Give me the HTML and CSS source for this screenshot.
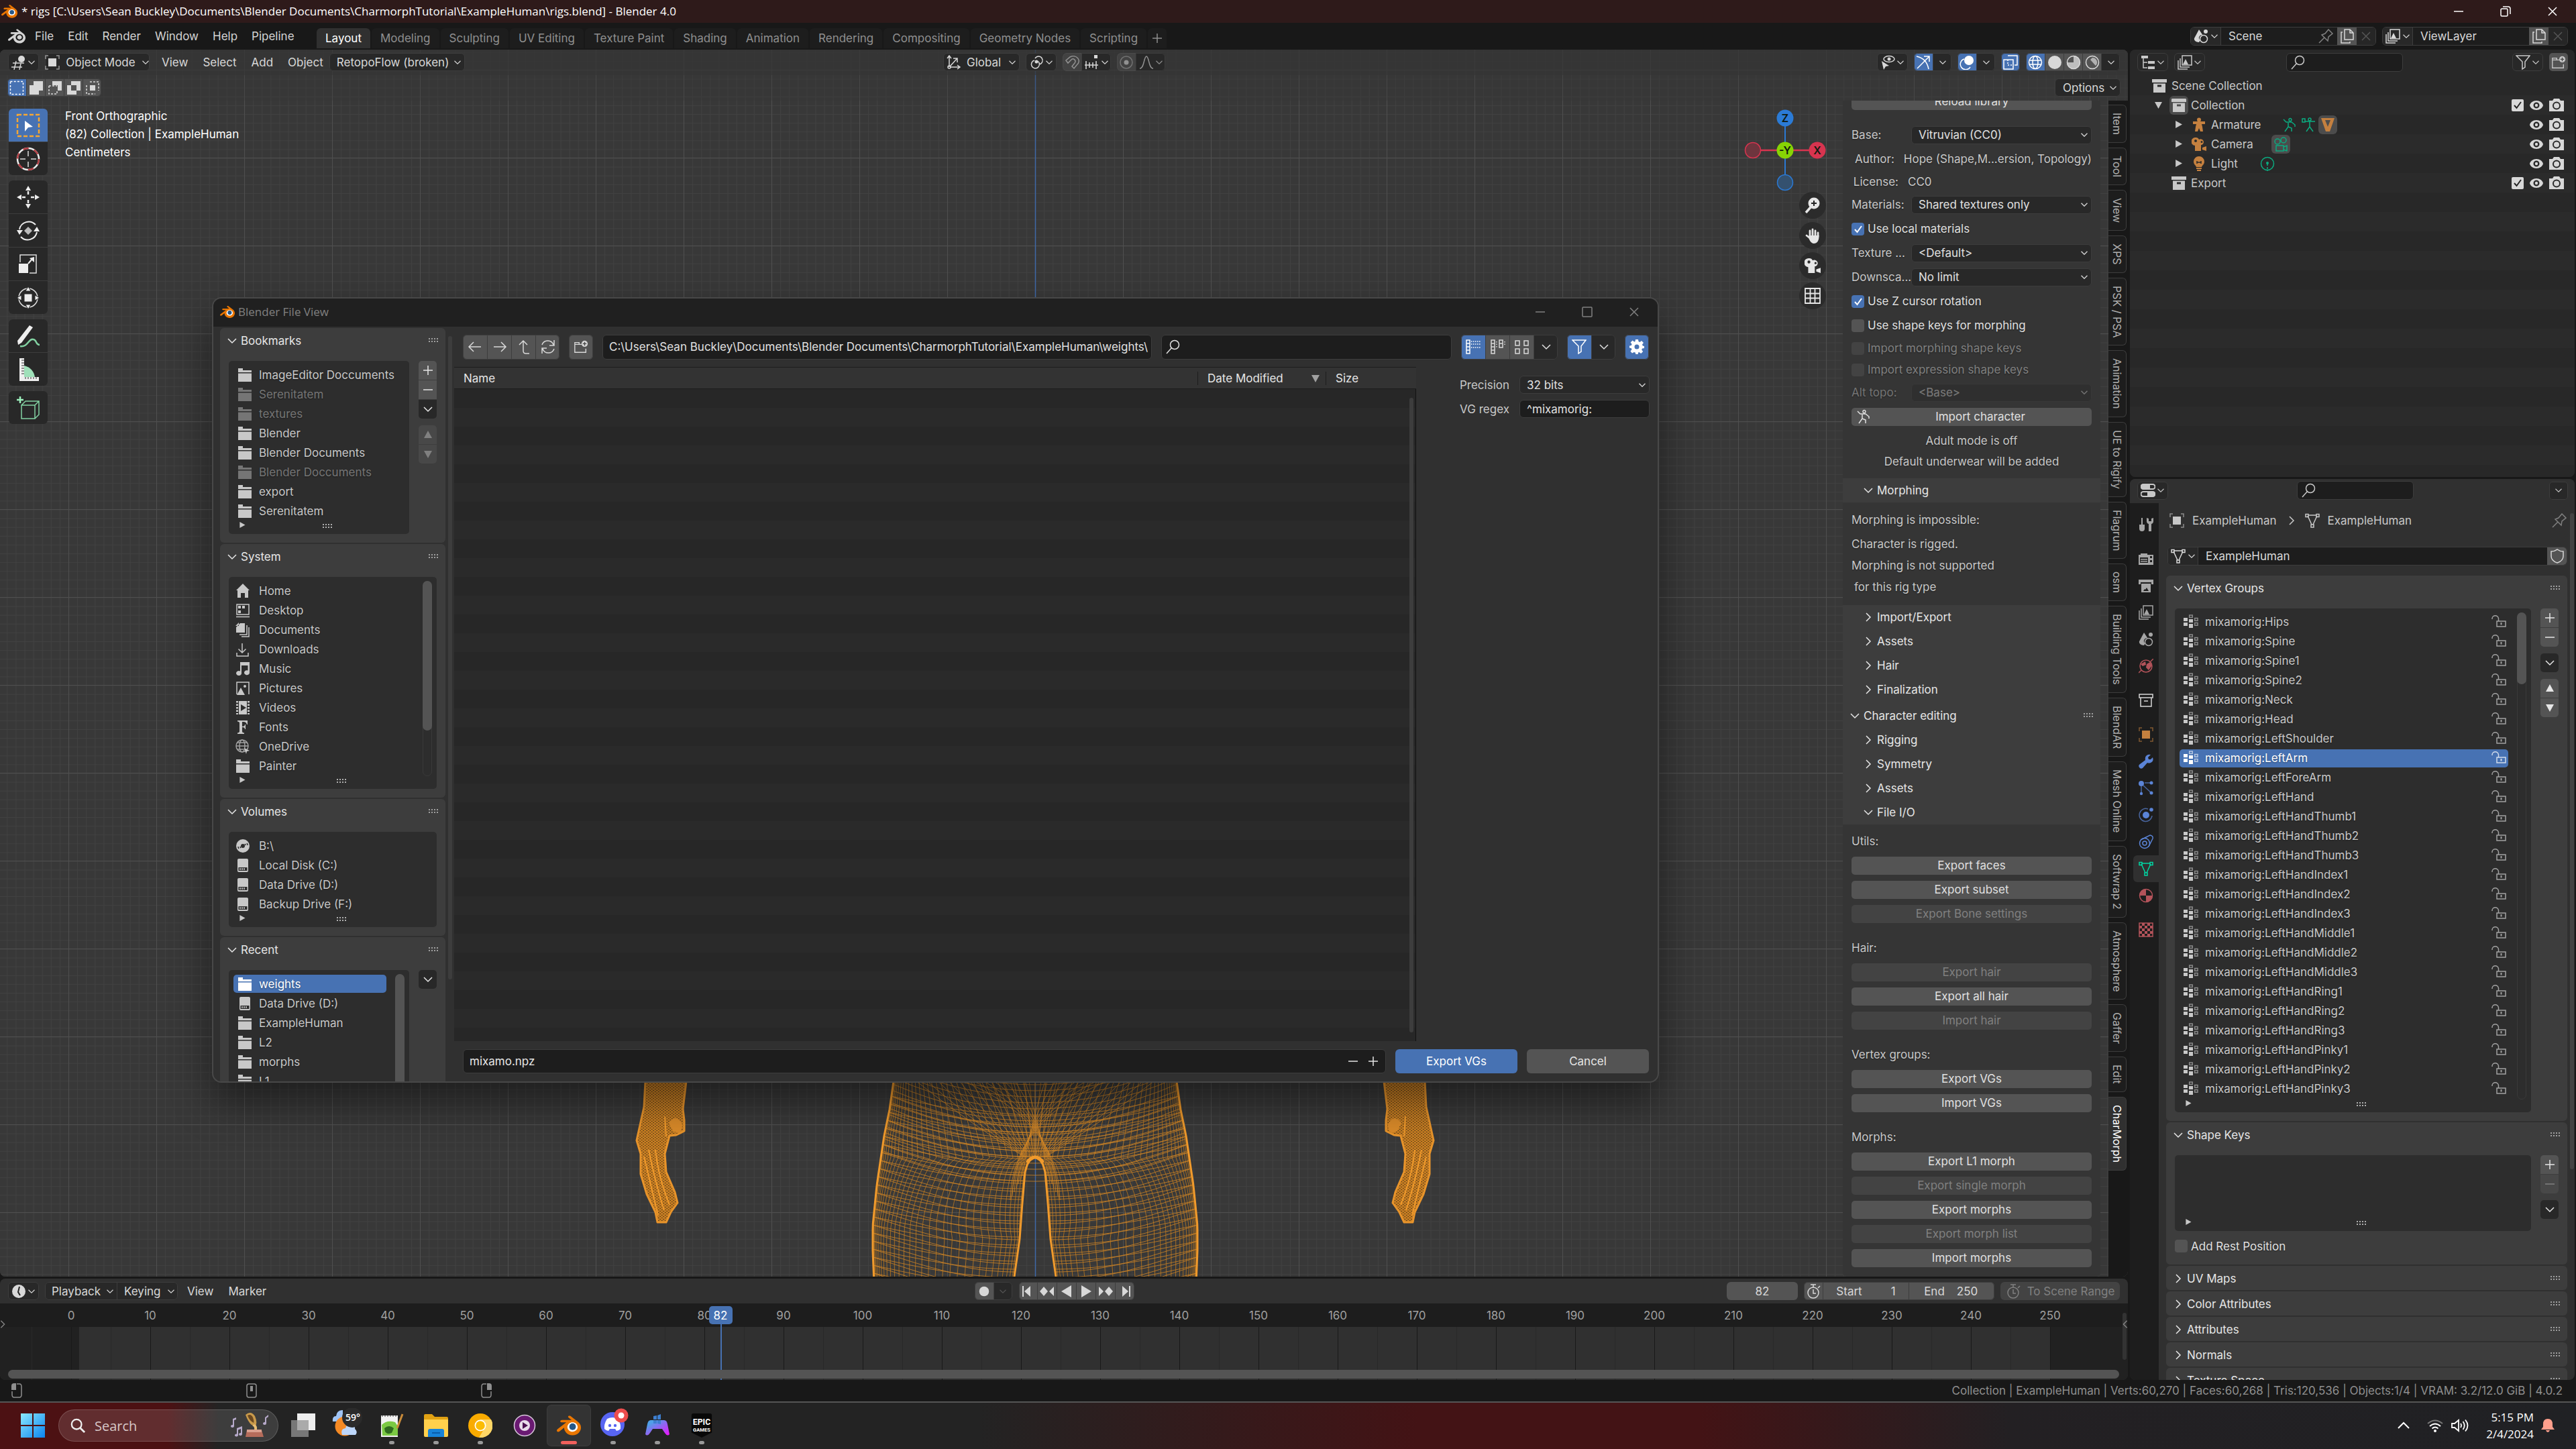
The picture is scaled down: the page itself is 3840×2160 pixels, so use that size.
FILE: index.html
```html
<!DOCTYPE html>
<html lang="en">
<head>
<meta charset="utf-8">
<title>rigs.blend - Blender 4.0</title>
<link rel="stylesheet" href="styles.css">
</head>
<body>
<svg class="sprite" aria-hidden="true">
<symbol id="blender" viewBox="0 0 24 24"><path fill="currentColor" d="M12.51 13.214c.046-.8.438-1.506 1.03-2.006a3.424 3.424 0 0 1 2.212-.79c.85 0 1.631.3 2.211.79.592.5.983 1.206 1.028 2.005.045.823-.285 1.586-.865 2.153a3.389 3.389 0 0 1-2.374.938 3.393 3.393 0 0 1-2.376-.938c-.58-.567-.91-1.33-.865-2.152M7.35 14.831c.006.314.106.922.256 1.398a7.372 7.372 0 0 0 1.593 2.757 8.227 8.227 0 0 0 2.787 2.001 8.947 8.947 0 0 0 3.66.76 8.964 8.964 0 0 0 3.657-.772 8.285 8.285 0 0 0 2.785-2.01 7.428 7.428 0 0 0 1.592-2.762 6.964 6.964 0 0 0 .25-3.074 7.123 7.123 0 0 0-1.016-2.779 7.764 7.764 0 0 0-1.852-2.043h.002L13.566 2.55l-.02-.015c-.492-.378-1.319-.376-1.86.002-.547.382-.609 1.015-.123 1.415l-.001.001 3.126 2.543-9.53.01h-.013c-.788.001-1.545.518-1.695 1.172-.154.665.38 1.217 1.2 1.22V8.9l4.83-.01-8.62 6.617-.034.025c-.813.622-1.075 1.658-.563 2.313.52.667 1.625.668 2.447.004L7.414 14s-.069.52-.063.831zm12.09 1.741c-.97.988-2.326 1.548-3.795 1.55-1.47.004-2.827-.552-3.797-1.538a4.51 4.51 0 0 1-1.036-1.622 4.282 4.282 0 0 1 .282-3.519 4.702 4.702 0 0 1 1.153-1.371c.942-.768 2.141-1.183 3.396-1.185 1.256-.002 2.455.41 3.398 1.175.48.391.87.854 1.152 1.367a4.28 4.28 0 0 1 .522 1.706 4.236 4.236 0 0 1-.239 1.811 4.54 4.54 0 0 1-1.035 1.626"/></symbol>
<symbol id="blender-color" viewBox="0 0 24 24"><circle cx="15.7" cy="13.2" r="6" fill="#fff"/><circle cx="15.7" cy="13.2" r="3.3" fill="#265787"/><path fill="#ea7600" d="M7.35 14.831c.006.314.106.922.256 1.398a7.372 7.372 0 0 0 1.593 2.757 8.227 8.227 0 0 0 2.787 2.001 8.947 8.947 0 0 0 3.66.76 8.964 8.964 0 0 0 3.657-.772 8.285 8.285 0 0 0 2.785-2.01 7.428 7.428 0 0 0 1.592-2.762 6.964 6.964 0 0 0 .25-3.074 7.123 7.123 0 0 0-1.016-2.779 7.764 7.764 0 0 0-1.852-2.043h.002L13.566 2.55l-.02-.015c-.492-.378-1.319-.376-1.86.002-.547.382-.609 1.015-.123 1.415l-.001.001 3.126 2.543-9.53.01h-.013c-.788.001-1.545.518-1.695 1.172-.154.665.38 1.217 1.2 1.22V8.9l4.83-.01-8.62 6.617-.034.025c-.813.622-1.075 1.658-.563 2.313.52.667 1.625.668 2.447.004L7.414 14s-.069.52-.063.831zm12.09 1.741c-.97.988-2.326 1.548-3.795 1.55-1.47.004-2.827-.552-3.797-1.538a4.51 4.51 0 0 1-1.036-1.622 4.282 4.282 0 0 1 .282-3.519 4.702 4.702 0 0 1 1.153-1.371c.942-.768 2.141-1.183 3.396-1.185 1.256-.002 2.455.41 3.398 1.175.48.391.87.854 1.152 1.367a4.28 4.28 0 0 1 .522 1.706 4.236 4.236 0 0 1-.239 1.811 4.54 4.54 0 0 1-1.035 1.626"/></symbol>
<symbol id="down" viewBox="0 0 16 16"><path class="ln" d="M2 5l6 6 6-6"/></symbol>
<symbol id="right" viewBox="0 0 16 16"><path class="ln" d="M5 2l6 6-6 6"/></symbol>
<symbol id="left" viewBox="0 0 16 16"><path class="ln" d="M11 2L5 8l6 6"/></symbol>
<symbol id="grip" viewBox="0 0 16 8"><path fill="currentColor" d="M1 0h2v2H1zm4 0h2v2H5zm4 0h2v2H9zm4 0h2v2h-2zM1 4h2v2H1zm4 0h2v2H5zm4 0h2v2H9zm4 0h2v2h-2z"/></symbol>
<symbol id="tri" viewBox="0 0 10 10"><path fill="currentColor" d="M1 0l9 5-9 5z"/></symbol>
<symbol id="tri-down" viewBox="0 0 12 12"><path fill="currentColor" d="M0 1h12L6 12z"/></symbol>
<symbol id="tri-up" viewBox="0 0 12 12"><path fill="currentColor" d="M0 11h12L6 0z"/></symbol>
<symbol id="plus" viewBox="0 0 16 16"><path class="ln" d="M8 1v14M1 8h14"/></symbol>
<symbol id="minus" viewBox="0 0 16 16"><path class="ln" d="M1 8h14"/></symbol>
<symbol id="cross" viewBox="0 0 16 16"><path class="ln" d="M2 2l12 12M14 2L2 14"/></symbol>
<symbol id="max" viewBox="0 0 16 16"><rect class="ln" x="1" y="1" width="14" height="14" rx="1"/></symbol>
<symbol id="restore" viewBox="0 0 16 16"><path class="ln" d="M1 5.500a1.500 1.500 0 0 1 1.500-1.500h7a1.500 1.500 0 0 1 1.500 1.500v8a1.500 1.500 0 0 1-1.500 1.500h-7a1.500 1.500 0 0 1-1.500-1.500zM4 1h8q3 0 3 3v8"/></symbol>
<symbol id="search" viewBox="0 0 22 22"><path class="ln" d="M1 21l7.500-8.500"/><circle class="ln" cx="13" cy="8" r="6.500"/></symbol>
<symbol id="folder" viewBox="0 0 22 22"><path fill="currentColor" d="M1 1h7v3h13v3H1zM1 8.500h20V21H1z"/></symbol>
<symbol id="newfolder" viewBox="0 0 24 22"><path class="ln" d="M13 7H9V4H2v16h18v-6M2 7h8"/><circle cx="18" cy="6" r="5" fill="currentColor"/><path d="M18 3v6M15 6h6" stroke="#444" stroke-width="1.500"/></symbol>
<symbol id="home" viewBox="0 0 22 22"><path fill="currentColor" d="M11 0l10 10h-2v11h-5v-7H8v7H3V10H1z"/></symbol>
<symbol id="desktop" viewBox="0 0 22 22"><path class="ln" d="M2 2h18v15H2zM1 20.500h20"/><path fill="currentColor" d="M4 4h4v4H4zm0 7h4v4H4zM10 4h4v4h-4z"/></symbol>
<symbol id="documents" viewBox="0 0 22 22"><path fill="currentColor" d="M7 1h7v14H1V7zM5 0L0 5h5z"/><path class="ln" d="M17 4v14H6M20 7v14H9"/></symbol>
<symbol id="download" viewBox="0 0 22 22"><path class="ln" d="M10 2v14M4.500 10.500L10 16l5.500-5.500M2 16v5h17v-5"/></symbol>
<symbol id="music" viewBox="0 0 22 22"><path fill="currentColor" d="M7 1h14v16a4 3.500 0 1 1-2.500-3.500V6H9v12a4 3.500 0 1 1-2-3.500z"/></symbol>
<symbol id="picture" viewBox="0 0 22 22"><path class="ln" d="M2 20V2h18v18"/><path fill="currentColor" d="M2 21l6-11 6 11z"/><circle cx="14" cy="8" r="2" fill="currentColor"/></symbol>
<symbol id="video" viewBox="0 0 22 22"><path fill="currentColor" fill-rule="evenodd" d="M5 1h12v20H5zm3 5v10l8-5z"/><path stroke="currentColor" stroke-width="3" stroke-dasharray="2.500 2" d="M2.500 1v20M19.500 1v20"/></symbol>
<symbol id="font" viewBox="0 0 22 22"><path fill="currentColor" d="M3 1h15v6h-1c-1-3-2-4-5-4h-2v7c3 0 4-1 4-3h1v7h-1c0-2-1-3-4-3v6c0 2 1 2 3 2.500V21H3v-1.500C5 19 6 19 6 17V5C6 3 5 3 3 2.500z"/></symbol>
<symbol id="globe" viewBox="0 0 22 22"><g opacity=".75"><circle class="ln" cx="10" cy="10" r="9"/><ellipse class="ln" cx="10" cy="10" rx="4" ry="9"/><path class="ln" d="M1 10h18M3 5h14M3 15h9"/></g><path fill="currentColor" d="M13 13l8 4-4 1-1 4z"/></symbol>
<symbol id="disc" viewBox="0 0 22 22"><circle cx="11" cy="11" r="10" fill="currentColor"/><circle cx="11" cy="11" r="3" fill="#2d2d2d"/><path d="M4 12a7 7 0 0 0 1 3M7 12a4 4 0 0 0 1 2M18 10a7 7 0 0 0-1-3M15 10a4 4 0 0 0-1-2" stroke="#2d2d2d" stroke-width="1.500" fill="none"/></symbol>
<symbol id="drive" viewBox="0 0 22 22"><path fill="currentColor" d="M5 1h12q2 0 2 2v16q0 2-2 2H5q-2 0-2-2V3q0-2 2-2z"/><path fill="#2d2d2d" d="M4.500 14h13v5h-13z"/><path stroke="currentColor" stroke-width="1.500" d="M7 15v3M10 15v3M13 15v3"/></symbol>
<symbol id="arrow-l" viewBox="0 0 22 22"><path class="ln" d="M20 11H2M9 4l-7 7 7 7"/></symbol>
<symbol id="arrow-r" viewBox="0 0 22 22"><path class="ln" d="M2 11h18M13 4l7 7-7 7"/></symbol>
<symbol id="arrow-u" viewBox="0 0 22 22"><path class="ln" d="M4 8l6-6 6 6M10 2v15q0 4 4 4h5"/></symbol>
<symbol id="refresh" viewBox="0 0 22 22"><path class="ln" d="M2 8a9 9 0 0 1 17 0M20 1v8h-7M20 14a9 9 0 0 1-17 0M2 21v-8h7"/></symbol>
<symbol id="listv" viewBox="0 0 22 22"><path class="ln" d="M1 1h5v20H1zM1 6h5M1 11h5M1 16h5"/><path class="ln" stroke-dasharray="1.500 1.500" d="M8 3h14M8 7h14M8 12h14"/></symbol>
<symbol id="listh" viewBox="0 0 22 22"><path class="ln" d="M1 1h5v20H1zM1 6h5M1 11h5M1 16h5M13 1h5v11h-5zM13 6h5"/><path class="ln" stroke-dasharray="1.500 2" d="M9 3v10M21 3v6"/></symbol>
<symbol id="thumbs" viewBox="0 0 22 22"><path class="ln" d="M1 2h6v7H1zM14 2h6v7h-6zM1 14h6v7H1zM14 14h6v7h-6z"/></symbol>
<symbol id="funnel" viewBox="0 0 22 22"><path class="ln" d="M1 1h20l-7 9v8l-4 3V10z"/></symbol>
<symbol id="gear" viewBox="0 0 22 22"><path fill="currentColor" fill-rule="evenodd" d="M9 0h4l.5 3 2 1 2.500-2 3 3-2 2.500.8 2L22 10v3l-3 .5-.8 2 2 2.500-3 3-2.700-2-1.500.6L12.700 22H9.300l-.6-2.400-2-.7L4 20.500l-2.500-3 2-2.500-.8-2L0 12.500V9.400L2.700 9l.9-2-2-2.500 3-3 2.600 2L8.500 3zM11 7.500a3.500 3.500 0 1 0 0 7 3.500 3.500 0 0 0 0-7z"/></symbol>
<symbol id="vg" viewBox="0 0 22 22"><path fill="currentColor" d="M0 5h6v5H0zM0 12h6v5H0zM8 7h6v5H8zM8 14h6v6H8z"/><path fill="none" stroke="currentColor" opacity=".6" stroke-width="1.500" d="M8.700 1h4.500v3.500H8.700zM16.700 5.500H21v3.700h-4.300zM16.700 12.500H21v3.700h-4.300z"/></symbol>
<symbol id="lock" viewBox="0 0 22 22"><g opacity=".75"><path class="ln" d="M8 10h13v8H8zM1 7a4.500 4.500 0 0 1 9.500-1v4"/><path fill="currentColor" d="M13.500 12h2v3.500h-2z"/></g></symbol>
<symbol id="objdata" viewBox="0 0 22 22"><path fill="currentColor" d="M5 5h12v12H5z"/><path class="ln" opacity=".6" d="M1 6V1h4M17 1h4v5M21 16v5h-4M5 21H1v-5"/></symbol>
<symbol id="mesh" viewBox="0 0 22 22"><path class="ln" d="M4 4l6 13M18 4l-6 13M5 3h12"/><path class="ln" d="M1 1.500h4v4H1zM17 1.500h4v4h-4zM9 17h4v4H9z"/></symbol>
<symbol id="shield" viewBox="0 0 22 22"><path class="ln" d="M11 1q4 3 9 3v7q0 7-9 10-9-3-9-10V4q5 0 9-3z"/></symbol>
<symbol id="pin" viewBox="0 0 22 22"><path class="ln" d="M1 21l8-8M5 9l9 9 1-6 6-5-6-6-5 6z"/></symbol>
<symbol id="collection" viewBox="0 0 22 22"><path fill="currentColor" fill-rule="evenodd" d="M0 1h22v5H0zM2 7.500h18V21H2zM8 9.500v3h6v-3z"/></symbol>
<symbol id="collection-o" viewBox="0 0 22 22"><path class="ln" d="M1 2h20v5H1zM3 7v13h16V7M8 12h6"/></symbol>
<symbol id="eye" viewBox="0 0 22 22"><path fill="currentColor" fill-rule="evenodd" d="M11 4c5 0 9 3 10 7-1 4-5 7-10 7S2 15 1 11c1-4 5-7 10-7zm0 2.500a4.500 4.500 0 1 0 0 9 4.500 4.500 0 0 0 0-9z"/><circle cx="11" cy="11" r="2.200" fill="currentColor"/></symbol>
<symbol id="photo" viewBox="0 0 22 22"><path fill="currentColor" fill-rule="evenodd" d="M0 4h5l2-3h8l2 3h5v16H0zm11 1.500a6 6 0 1 0 0 12 6 6 0 0 0 0-12z"/><circle cx="11" cy="11.500" r="4" fill="currentColor"/></symbol>
<symbol id="arm" viewBox="0 0 22 22"><circle cx="11" cy="3.500" r="3" fill="currentColor"/><path fill="currentColor" d="M2 6h18v4h-5l1 4 1 7h-4l-2-5-2 5H5l1-7 1-4H2z"/></symbol>
<symbol id="camera" viewBox="0 0 22 22"><path fill="currentColor" fill-rule="evenodd" d="M6 1a5 5 0 0 1 5 3 4.500 4.500 0 1 1 4 8h-1v9H5v-8A6 6 0 0 1 6 1zm0 3a2 2 0 1 0 0 4 2 2 0 0 0 0-4zm9 2a1.500 1.500 0 1 0 0 3 1.500 1.500 0 0 0 0-3zM22 14v7l-6-2v-3z"/></symbol>
<symbol id="camera-o" viewBox="0 0 22 22"><path class="ln" d="M4 13h11v8H4zM15 15l5-2v8l-5-2"/><circle class="ln" cx="6" cy="7" r="4"/><circle class="ln" cx="15" cy="5" r="4"/></symbol>
<symbol id="bulb" viewBox="0 0 22 22"><path fill="currentColor" d="M11 0a8 8 0 0 1 8 8c0 4-3 5-4 8H7c-1-3-4-4-4-8a8 8 0 0 1 8-8zM7 17h8v2H7zM8 20h6v2H8z"/><path d="M8 7v4M8 9h6M14 7v4" stroke="#282828" stroke-width="1.500"/></symbol>
<symbol id="light-o" viewBox="0 0 22 22"><circle class="ln" cx="11" cy="11" r="9.500"/><circle cx="11" cy="10" r="2" fill="currentColor"/><path class="ln" stroke-dasharray="3 2" d="M11 11v11"/></symbol>
<symbol id="pose" viewBox="0 0 22 22"><path class="ln" d="M1 3l4 4h8l5 4v3M8 8v6l-5 7M8 14l5 2v5M11 1.500a2 2 0 1 1-.1 0"/></symbol>
<symbol id="pose2" viewBox="0 0 22 22"><path class="ln" d="M1 2h4v5H1zM5 6h15M12 6v8l-5 7M12 14l5 7"/><circle class="ln" cx="12" cy="3" r="2"/></symbol>
<symbol id="tridata" viewBox="0 0 22 22"><path fill="currentColor" fill-rule="evenodd" d="M1 1h20l-7 20H8zM7 4l4 10 4-10z"/></symbol>
<symbol id="grid3d" viewBox="0 0 22 22"><path class="ln" d="M2 12h17M0 18h16M7 9L4 22M14 13l-2 9"/><circle cx="15" cy="6" r="5" fill="currentColor"/></symbol>
<symbol id="tree" viewBox="0 0 22 22"><path class="ln" d="M4 4v15h6M4 11h6"/><path fill="currentColor" d="M1 1h10v4H1zM11 9h10v4H11zM11 17h10v4H11z"/></symbol>
<symbol id="layers" viewBox="0 0 22 22"><path class="ln" d="M7 1h14v14H7zM4 5v13h14M1 8v13h14"/><path fill="currentColor" d="M8 14l4-8 4 8z"/></symbol>
<symbol id="scene" viewBox="0 0 22 22"><path fill="currentColor" d="M8 1l6 9a4 4 0 0 0-4 7l-2 3a7 5 0 0 1-7-6z"/><circle class="ln" cx="15" cy="15" r="5.500"/><circle cx="18" cy="4" r="3" fill="currentColor"/></symbol>
<symbol id="copy" viewBox="0 0 22 22"><path class="ln" d="M7 1h8l5 5v10H7zM15 1v5h5M4 5H2v16h13v-2"/></symbol>
<symbol id="axes" viewBox="0 0 22 22"><path class="ln" d="M4 18V2M1 5l3-4 3 4M5 18h14M16 15l4 3-4 3M5 17L15 6M10 5h6v6"/><circle class="ln" cx="4" cy="18" r="2"/></symbol>
<symbol id="pivot" viewBox="0 0 22 22"><path class="ln" d="M9 5a6 6 0 1 1 6 9M13 9a6 6 0 1 1-5-1"/><circle cx="11" cy="10" r="2.500" fill="currentColor"/></symbol>
<symbol id="magnet" viewBox="0 0 22 22"><path class="ln" d="M2 8l6-5c10-5 18 6 10 12l-4 5-3-3 4-5c3-4-2-8-5-5L5 12z"/></symbol>
<symbol id="snap" viewBox="0 0 22 22"><path class="ln" d="M2 9v12M7 11v8M12 11v8M17 9v12M0 15h20"/><path fill="currentColor" d="M14 0h5v5h-5z"/></symbol>
<symbol id="prop" viewBox="0 0 22 22"><circle class="ln" cx="11" cy="11" r="9" opacity=".6"/><circle cx="11" cy="11" r="3.500" fill="currentColor"/></symbol>
<symbol id="falloff" viewBox="0 0 22 22"><path class="ln" d="M1 20C8 20 7 2 11 2s3 18 10 18"/></symbol>
<symbol id="vis" viewBox="0 0 22 22"><path fill="currentColor" d="M2 9l11 7-5 1-3 5z"/><ellipse class="ln" cx="13" cy="6" rx="8" ry="4.500"/><circle cx="13" cy="6" r="2.500" fill="currentColor"/></symbol>
<symbol id="gizmo" viewBox="0 0 22 22"><path class="ln" d="M2 20L20 2M12 2h8v8M1 2q15 3 18 19"/></symbol>
<symbol id="overlay" viewBox="0 0 22 22"><circle cx="14" cy="8" r="7" fill="currentColor"/><path class="ln" d="M7 6a8 8 0 1 0 9 12"/></symbol>
<symbol id="xray" viewBox="0 0 22 22"><path class="ln" d="M7 1h14v14h-4M1 7h14v14H1z"/><path class="ln" stroke-dasharray="2 2" d="M7 7v8h8"/></symbol>
<symbol id="wire" viewBox="0 0 22 22"><circle class="ln" cx="11" cy="11" r="9.500"/><ellipse class="ln" cx="11" cy="11" rx="4" ry="9.500"/><path class="ln" d="M2 8h18M2 14h18"/></symbol>
<symbol id="solid" viewBox="0 0 22 22"><circle cx="11" cy="11" r="10" fill="currentColor"/></symbol>
<symbol id="matprev" viewBox="0 0 22 22"><circle class="ln" cx="11" cy="11" r="9.500"/><path fill="currentColor" d="M11 1a10 10 0 0 1 0 20zM1 11h10v10A10 10 0 0 1 1 11z" opacity=".8"/></symbol>
<symbol id="rendered" viewBox="0 0 22 22"><circle class="ln" cx="11" cy="11" r="9.500"/><path fill="currentColor" opacity=".7" d="M11 4a7 7 0 0 1 5 12l-8-9z"/></symbol>
<symbol id="props" viewBox="0 0 22 22"><path fill="currentColor" fill-rule="evenodd" d="M4 1h14a4 4 0 0 1 0 9H4a4 4 0 0 1 0-9zm10 2v5h4a2 2 0 0 0 0-5zM4 12h14a4 4 0 0 1 0 9H4a4 4 0 0 1 0-9zm0 2a2.500 2.500 0 0 0 0 5h6v-5z"/></symbol>
<symbol id="tools" viewBox="0 0 22 22"><path fill="currentColor" d="M4 1h2v10h3v6q0 4-4 4t-4-4v-6h3zM12 1v5q0 3 3 4v11h4V10q3-1 3-4V1l-3 1v4h-4V2z"/></symbol>
<symbol id="render" viewBox="0 0 22 22"><path fill="currentColor" fill-rule="evenodd" d="M0 5h3V3h10v2h9v15H0zm2 4v8h12V9zm15-2v3h3V7zm0 6v3h3v-3z"/><path fill="currentColor" d="M3 11h10v1.500H3zM3 14h10v1.500H3z"/></symbol>
<symbol id="output" viewBox="0 0 22 22"><path fill="currentColor" fill-rule="evenodd" d="M0 2h22v7h-3V6H3v3H0zM4 8h14v13H4zm3 11h8l-3-5-2 3-1-1z"/></symbol>
<symbol id="world" viewBox="0 0 22 22"><circle class="ln" cx="11" cy="11" r="9"/><path fill="currentColor" d="M3 8l7-4 1 5-5 2zM12 8l5-3 3 5-5 7-4-4z"/><path class="ln" d="M0 21l4-4M18 4l4-4"/></symbol>
<symbol id="wrench" viewBox="0 0 22 22"><path fill="currentColor" d="M21 5q2 6-3 8-3 1-5 0l-7 8q-3 2-5-1t1-5l8-6q-1-5 2-7 3-2 6-1l-4 4 1 3 3 0z"/></symbol>
<symbol id="particles" viewBox="0 0 22 22"><circle cx="4" cy="4" r="4" fill="currentColor"/><path class="ln" d="M4 8v11M9 3h10M7 7l12 11" opacity=".7"/><circle cx="19" cy="3" r="2.500" fill="currentColor"/><circle cx="4" cy="19" r="2.200" fill="currentColor"/><circle cx="19" cy="18" r="2.500" fill="currentColor"/></symbol>
<symbol id="physics" viewBox="0 0 22 22"><circle cx="11" cy="11" r="5" fill="currentColor"/><path class="ln" opacity=".7" d="M14 2a9.500 9.500 0 1 0 6 10"/><circle cx="19" cy="3" r="2.800" fill="currentColor"/></symbol>
<symbol id="constraint" viewBox="0 0 22 22"><path class="ln" d="M3 8L17 1q5 1 4 5l-6 12"/><circle class="ln" cx="9" cy="13" r="7.500"/><circle class="ln" cx="9" cy="13" r="3"/></symbol>
<symbol id="material" viewBox="0 0 22 22"><circle class="ln" cx="11" cy="11" r="9.500"/><path fill="currentColor" d="M11 1v10H1A10 10 0 0 1 11 1zM11 11h10a10 10 0 0 1-10 10z"/></symbol>
<symbol id="texture" viewBox="0 0 22 22"><path class="ln" d="M1 1h20v20H1z"/><path fill="currentColor" d="M5 1h4v4H5zm8 0h4v4h-4zM1 5h4v4H1zm8 0h4v4H9zm8 0h4v4h-4zM5 9h4v4H5zm8 0h4v4h-4zM1 13h4v4H1zm8 0h4v4H9zm8 0h4v4h-4zM5 17h4v4H5zm8 0h4v4h-4z"/></symbol>
<symbol id="clock" viewBox="0 0 22 22"><circle cx="11" cy="11" r="10" fill="currentColor"/><path d="M12 4l-2 8 3 5" stroke="#222" stroke-width="2" fill="none"/></symbol>
<symbol id="stopwatch" viewBox="0 0 22 22"><circle class="ln" cx="11" cy="13" r="8"/><path class="ln" d="M11 5V1M7 1h8M18 6l3-3M11 8v6h4"/></symbol>
</svg>

<div class="app">
<header class="titlebar">
  <svg class="ic"><use href="#blender-color"/></svg>
  <h1>* rigs [C:\Users\Sean Buckley\Documents\Blender Documents\CharmorphTutorial\ExampleHuman\rigs.blend] - Blender 4.0</h1>
  <div class="wincontrols">
    <button aria-label="Minimize"><svg class="i16"><use href="#minus"/></svg></button>
    <button aria-label="Restore"><svg class="i16"><use href="#restore"/></svg></button>
    <button aria-label="Close"><svg class="i16"><use href="#cross"/></svg></button>
  </div>
</header>

<nav class="topbar">
  <svg class="ic logo"><use href="#blender"/></svg>
  <div class="menus"><button>File</button><button>Edit</button><button>Render</button><button>Window</button><button>Help</button><button>Pipeline</button></div>
  <div class="workspaces"><button class="on">Layout</button><button>Modeling</button><button>Sculpting</button><button>UV Editing</button><button>Texture Paint</button><button>Shading</button><button>Animation</button><button>Rendering</button><button>Compositing</button><button>Geometry Nodes</button><button>Scripting</button><button aria-label="Add workspace"><svg class="i16"><use href="#plus"/></svg></button></div>
  <div class="datablocks">
    <div class="idblock scene"><button class="dd" aria-label="Browse scene"><svg class="ic"><use href="#scene"/></svg><svg class="ch"><use href="#down"/></svg></button><input aria-label="Scene" value="Scene"><svg class="ic pin"><use href="#pin"/></svg><button class="act" aria-label="New scene"><svg class="ic"><use href="#copy"/></svg></button><button class="off" aria-label="Delete scene"><svg class="i16"><use href="#cross"/></svg></button></div>
    <div class="idblock layer"><button class="dd" aria-label="Browse layer"><svg class="ic"><use href="#layers"/></svg><svg class="ch"><use href="#down"/></svg></button><input aria-label="View layer" value="ViewLayer"><button class="act" aria-label="New layer"><svg class="ic"><use href="#copy"/></svg></button><button class="off" aria-label="Delete layer"><svg class="i16"><use href="#cross"/></svg></button></div>
  </div>
</nav>

<main class="areas">
<div class="leftcol">
<section class="viewport">
  <svg class="canvas" viewBox="0 0 3172 1829" preserveAspectRatio="xMidYMax slice" aria-hidden="true">
    <defs>
      <pattern id="minor" width="13.1" height="13.1" patternUnits="userSpaceOnUse" x="1543" y="161.500"><path d="M0 .5H13.100M.5 0V13.100" stroke="#414141" stroke-width="1"/></pattern>
      <pattern id="major" width="131" height="131" patternUnits="userSpaceOnUse" x="1543" y="161"><path d="M0 .5H131M.5 0V131" stroke="#4f4f4f" stroke-width="1"/></pattern>
      <pattern id="weave" width="5" height="4" patternUnits="userSpaceOnUse"><path fill="#c47c22" d="M0 0h5v4H0z"/><path fill="#4a3318" d="M1 1h1.500v1H1zM3.500 3H5v1H3.500z"/></pattern>
    </defs>
    <rect x="-4000" y="-3000" width="12000" height="9000" fill="#383838"/>
    <rect x="-4000" y="-3000" width="12000" height="9000" fill="url(#minor)"/>
    <rect x="-4000" y="-3000" width="12000" height="9000" fill="url(#major)"/>
    <path d="M1543.500-3000V6000" stroke="#3f68a8" stroke-width="1.500"/>
    <g id="human"></g>
  </svg>
  <div class="vhead">
    <div class="grp start">
      <button class="dd box" aria-label="Editor type"><svg class="ic"><use href="#grid3d"/></svg><svg class="ch"><use href="#down"/></svg></button>
      <button class="dd box mode"><svg class="ic"><use href="#objdata"/></svg><span>Object Mode</span><svg class="ch"><use href="#down"/></svg></button>
      <div class="menus vm"><button>View</button><button>Select</button><button>Add</button><button>Object</button></div>
      <button class="dd box retopo"><span>RetopoFlow (broken)</span><svg class="ch"><use href="#down"/></svg></button>
    </div>
    <div class="grp mid">
      <button class="dd box global"><svg class="ic"><use href="#axes"/></svg><span>Global</span><svg class="ch"><use href="#down"/></svg></button>
      <button class="dd box" aria-label="Pivot"><svg class="ic"><use href="#pivot"/></svg><svg class="ch"><use href="#down"/></svg></button>
      <div class="seg"><button class="lit dim" aria-label="Snap"><svg class="ic"><use href="#magnet"/></svg></button><button class="dd" aria-label="Snap to"><svg class="ic"><use href="#snap"/></svg><svg class="ch"><use href="#down"/></svg></button></div>
      <div class="seg"><button class="lit dim" aria-label="Proportional editing"><svg class="ic"><use href="#prop"/></svg></button><button class="dd dim" aria-label="Falloff"><svg class="ic"><use href="#falloff"/></svg><svg class="ch"><use href="#down"/></svg></button></div>
    </div>
    <div class="grp end">
      <button class="dd box" aria-label="Visibility"><svg class="ic"><use href="#vis"/></svg><svg class="ch"><use href="#down"/></svg></button>
      <div class="seg"><button class="on" aria-label="Gizmos"><svg class="ic"><use href="#gizmo"/></svg></button><button aria-label="Gizmo options"><svg class="ch"><use href="#down"/></svg></button></div>
      <div class="seg"><button class="on" aria-label="Overlays"><svg class="ic"><use href="#overlay"/></svg></button><button aria-label="Overlay options"><svg class="ch"><use href="#down"/></svg></button></div>
      <div class="seg"><button class="on" aria-label="X-ray"><svg class="ic"><use href="#xray"/></svg></button></div>
      <div class="seg"><button class="on" aria-label="Wireframe"><svg class="ic"><use href="#wire"/></svg></button><button class="lit" aria-label="Solid"><svg class="ic"><use href="#solid"/></svg></button><button class="lit" aria-label="Material preview"><svg class="ic"><use href="#matprev"/></svg></button><button class="lit" aria-label="Rendered"><svg class="ic"><use href="#rendered"/></svg></button><button aria-label="Shading options"><svg class="ch"><use href="#down"/></svg></button></div>
    </div>
  </div>
  <div class="vtool">
    <div class="seg selmodes">
      <button class="on" aria-label="Set"><svg class="ic" viewBox="0 0 22 22"><path class="ln" stroke-dasharray="3 2.200" d="M1.500 1.500h19v19h-19z"/></svg></button>
      <button class="lit" aria-label="Extend"><svg class="ic" viewBox="0 0 22 22"><path fill="currentColor" d="M7 1h14v14h-6v6H1V7h6z"/></svg></button>
      <button class="lit" aria-label="Subtract"><svg class="ic" viewBox="0 0 22 22"><path fill="currentColor" d="M7 1h14v14h-6V7H7z"/><path class="ln" stroke-dasharray="3 2" d="M2 8v12h12v-4M2 8h12"/></svg></button>
      <button class="lit" aria-label="Difference"><svg class="ic" viewBox="0 0 22 22"><path fill="currentColor" fill-rule="evenodd" d="M7 1h14v14h-6v6H1V7h6zm0 6v8h8V7z"/></svg></button>
      <button class="lit" aria-label="Intersect"><svg class="ic" viewBox="0 0 22 22"><path fill="currentColor" d="M7 7h8v8H7z"/><path class="ln" stroke-dasharray="3 2" d="M7 2h13v13M2 7v13h13"/></svg></button>
    </div>
    <button class="dd box options"><span>Options</span><svg class="ch"><use href="#down"/></svg></button>
  </div>
  <div class="vbody">
    <div class="toolbar">
      <div class="tgroup">
        <button class="on" aria-label="Select box"><svg viewBox="0 0 36 36"><path fill="none" stroke="#f5a733" stroke-width="2.500" stroke-dasharray="6 3" d="M2 2h32v32H2z"/><path fill="#fff" d="M13 11l12 9-7 1-5 6z"/></svg></button>
        <button aria-label="Cursor"><svg viewBox="0 0 36 36"><circle cx="18" cy="18" r="16" fill="none" stroke="#eee" stroke-width="2.500"/><circle cx="18" cy="18" r="16" fill="none" stroke="#b33b41" stroke-width="2.500" stroke-dasharray="8.400 8.400"/><path stroke="#ddd" stroke-width="1.500" d="M18 6v8M18 22v8M6 18h8M22 18h8"/></svg></button>
      </div>
      <div class="tgroup">
        <button aria-label="Move"><svg viewBox="0 0 36 36"><path fill="#eee" d="M18 1l4 7h-8zM18 35l4-7h-8zM1 18l7-4v8zM35 18l-7-4v8z"/><path stroke="#eee" stroke-width="2.500" d="M18 9v5M18 22v5M9 18h5M22 18h5"/></svg></button>
        <button aria-label="Rotate"><svg viewBox="0 0 36 36"><path fill="none" stroke="#eee" stroke-width="2" d="M5 16a14 14 0 0 1 24-7M31 20a14 14 0 0 1-24 7"/><path fill="#eee" d="M1 17h9l-5 7zM35 19h-9l5-7z"/><path fill="#bbb" d="M18 12l6 6-6 6-6-6z"/></svg></button>
        <button aria-label="Scale"><svg viewBox="0 0 36 36"><path fill="none" stroke="#ddd" stroke-width="1.500" d="M6 15V4h24v27H20"/><path fill="#eee" d="M4 17h14v14H4zM27 7v8l-7-6z"/><path stroke="#eee" stroke-width="2" d="M18 17l6-7"/></svg></button>
        <button aria-label="Transform"><svg viewBox="0 0 36 36"><circle cx="18" cy="18" r="14" fill="none" stroke="#ddd" stroke-width="1.500"/><path fill="#eee" stroke="#262626" d="M18 1l4 7h-8zM18 35l4-7h-8zM1 18l7-4v8zM35 18l-7-4v8zM12 12h12v12H12z"/></svg></button>
      </div>
      <div class="tgroup">
        <button aria-label="Annotate"><svg viewBox="0 0 36 36"><path fill="#eee" d="M20 2l5 3-17 23-5 3-1-6z"/><path fill="none" stroke="#82d2a2" stroke-width="2.500" d="M6 33c12 2 12-12 20-10 5 1 3 8 9 8"/></svg></button>
        <button aria-label="Measure"><svg viewBox="0 0 36 36"><path fill="#9fe0b9" d="M12 12a20 20 0 0 1 16 18H12z"/><path fill="#eee" d="M5 1h7v28h22v6H5z"/><path stroke="#333" d="M8 4h4M8 8h4M8 12h4M8 16h4M8 20h4M8 24h4M14 29v3M18 29v3M22 29v3M26 29v3M30 29v3"/></svg></button>
      </div>
      <div class="tgroup">
        <button aria-label="Add cube"><svg viewBox="0 0 36 36"><path fill="none" stroke="#82d2a2" stroke-width="1.500" d="M8 14h20v20H8zM8 14l6-6h20v20l-6 6M28 14l6-6"/><path stroke="#9df0bd" stroke-width="2.500" d="M6 1v10M1 6h10"/></svg></button>
      </div>
    </div>
    <div class="vinfo"><p>Front Orthographic</p><p>(82) Collection | ExampleHuman</p><p>Centimeters</p></div>
    <div class="navcol">
      <svg class="axisgizmo" viewBox="0 0 128 126"><path stroke="#2b79d3" stroke-width="2" d="M64 16v96"/><path stroke="#d8344f" stroke-width="2.500" d="M64 64h48M28 64h30"/><circle cx="16" cy="64" r="11.500" fill="#6e353e" stroke="#d8344f" stroke-width="1.500"/><circle cx="64" cy="112" r="11.500" fill="#34516f" stroke="#2b79d3" stroke-width="1.500"/><circle cx="64" cy="16" r="12.500" fill="#2b7bd6"/><circle cx="112" cy="64" r="12.500" fill="#d8344f"/><circle cx="64" cy="64" r="12.500" fill="#87d404"/><g class="axl"><text x="64" y="22">Z</text><text x="112" y="70">X</text><text x="64" y="70">-Y</text></g></svg>
      <button aria-label="Zoom"><svg viewBox="0 0 24 24"><circle cx="14" cy="9" r="8.500" fill="#e6e6e6"/><path stroke="#e6e6e6" stroke-width="3.500" d="M2 23l7-8"/><path stroke="#222" stroke-width="2" d="M14 5v8M10 9h8"/></svg></button>
      <button aria-label="Pan"><svg viewBox="0 0 24 24"><path fill="none" stroke="#e6e6e6" stroke-width="2.800" stroke-linecap="round" d="M8 13V5M12 12V3M16 12V5M20 13V8M8 16l-5-4"/><path fill="#e6e6e6" d="M6.600 12h15q0 12-8 12-4 0-7-7z"/></svg></button>
      <button aria-label="Camera view"><svg class="nv"><use href="#camera"/></svg></button>
      <button aria-label="Perspective"><svg viewBox="0 0 24 24"><path fill="none" stroke="#e6e6e6" stroke-width="1.800" d="M1 1h22v22H1zM8.500 1v22M15.500 1v22M1 8.500h22M1 15.500h22"/></svg></button>
    </div>
    <aside class="npanel">
      <div class="nbody first">
        <div class="row reload"><button class="btn">Reload library</button></div>
        <div class="row sp"><label for="base">Base:</label><select id="base"><option>Vitruvian (CC0)</option></select></div>
        <div class="row r32"><span class="ra">Author:</span><span class="val">Hope (Shape,M...ersion, Topology)</span></div>
        <div class="row r32"><span class="ra">License:</span><span class="val">CC0</span></div>
        <div class="row"><label for="mats">Materials:</label><select id="mats"><option>Shared textures only</option></select></div>
        <div class="row"><label class="ck"><input type="checkbox" checked>Use local materials</label></div>
        <div class="row"><label for="tex">Texture ...</label><select id="tex"><option>&lt;Default&gt;</option></select></div>
        <div class="row"><label for="dsc">Downsca...</label><select id="dsc"><option>No limit</option></select></div>
        <div class="row"><label class="ck"><input type="checkbox" checked>Use Z cursor rotation</label></div>
        <div class="row"><label class="ck"><input type="checkbox">Use shape keys for morphing</label></div>
        <div class="row r32"><label class="ck dis"><input type="checkbox" disabled>Import morphing shape keys</label></div>
        <div class="row r32"><label class="ck dis"><input type="checkbox" disabled>Import expression shape keys</label></div>
        <div class="row"><label class="dis" for="alt">Alt topo:</label><select id="alt" disabled><option>&lt;Base&gt;</option></select></div>
        <div class="row"><button class="btn iconic"><svg class="ic bicon"><use href="#pose"/></svg>Import character</button></div>
        <div class="row ctr">Adult mode is off</div>
        <div class="row r26 ctr">Default underwear will be added</div>
      </div>
      <button class="nh sub"><svg class="i16"><use href="#down"/></svg>Morphing</button>
      <div class="nbody msg"><p>Morphing is impossible:</p><p>Character is rigged.</p><p class="tight">Morphing is not supported</p><p class="in">for this rig type</p></div>
      <button class="nh sub"><svg class="i16"><use href="#right"/></svg>Import/Export</button>
      <button class="nh sub"><svg class="i16"><use href="#right"/></svg>Assets</button>
      <button class="nh sub"><svg class="i16"><use href="#right"/></svg>Hair</button>
      <button class="nh sub"><svg class="i16"><use href="#right"/></svg>Finalization</button>
      <button class="nh top"><svg class="i16"><use href="#down"/></svg>Character editing<svg class="grip"><use href="#grip"/></svg></button>
      <button class="nh sub"><svg class="i16"><use href="#right"/></svg>Rigging</button>
      <button class="nh sub"><svg class="i16"><use href="#right"/></svg>Symmetry</button>
      <button class="nh sub"><svg class="i16"><use href="#right"/></svg>Assets</button>
      <button class="nh sub"><svg class="i16"><use href="#down"/></svg>File I/O</button>
      <div class="nbody io">
        <div><div class="row">Utils:</div><div class="row"><button class="btn">Export faces</button></div><div class="row"><button class="btn">Export subset</button></div><div class="row"><button class="btn" disabled>Export Bone settings</button></div></div>
        <div><div class="row">Hair:</div><div class="row"><button class="btn" disabled>Export hair</button></div><div class="row"><button class="btn">Export all hair</button></div><div class="row"><button class="btn" disabled>Import hair</button></div></div>
        <div><div class="row">Vertex groups:</div><div class="row"><button class="btn">Export VGs</button></div><div class="row"><button class="btn">Import VGs</button></div></div>
        <div><div class="row">Morphs:</div><div class="row"><button class="btn">Export L1 morph</button></div><div class="row"><button class="btn" disabled>Export single morph</button></div><div class="row"><button class="btn">Export morphs</button></div><div class="row"><button class="btn" disabled>Export morph list</button></div><div class="row"><button class="btn">Import morphs</button></div></div>
      </div>
    </aside>
    <nav class="vtabs"><button>Item</button><button>Tool</button><button>View</button><button>XPS</button><button>PSK / PSA</button><button>Animation</button><button>UE to Rigify</button><button>Flagrum</button><button>osm</button><button>Building Tools</button><button>BlendAR</button><button>Mesh Online</button><button>Softwrap 2</button><button>Atmosphere</button><button>Gaffer</button><button>Edit</button><button class="on">CharMorph</button></nav>
  </div>
</section>

<section class="timeline">
  <div class="thead">
    <div class="grp start">
      <button class="dd box" aria-label="Editor type"><svg class="ic"><use href="#clock"/></svg><svg class="ch"><use href="#down"/></svg></button>
      <div class="seg pk"><button class="dd">Playback<svg class="ch"><use href="#down"/></svg></button><button class="dd">Keying<svg class="ch"><use href="#down"/></svg></button></div>
      <div class="menus tm"><button>View</button><button>Marker</button></div>
    </div>
    <div class="grp play">
      <div class="seg"><button class="lit" aria-label="Auto keying"><svg class="i16"><use href="#solid"/></svg></button><button class="dim2" aria-label="Keying options"><svg class="ch"><use href="#down"/></svg></button></div>
      <div class="seg transport">
        <button class="lit" aria-label="First frame"><svg class="ic" viewBox="0 0 22 22"><path fill="currentColor" d="M3 3h2v16H3zM15 3v16L6 11z"/></svg></button>
        <button class="lit" aria-label="Previous key"><svg class="ic" viewBox="0 0 22 22"><path fill="currentColor" d="M6 4l6 7-6 7-6-7zM21 4v14l-7-7z"/></svg></button>
        <button class="lit" aria-label="Play reverse"><svg class="ic" viewBox="0 0 22 22"><path fill="currentColor" d="M18 2v18L3 11z"/></svg></button>
        <button class="lit" aria-label="Play"><svg class="ic" viewBox="0 0 22 22"><path fill="currentColor" d="M4 2v18l15-9z"/></svg></button>
        <button class="lit" aria-label="Next key"><svg class="ic" viewBox="0 0 22 22"><path fill="currentColor" d="M16 4l6 7-6 7-6-7zM1 4v14l7-7z"/></svg></button>
        <button class="lit" aria-label="Last frame"><svg class="ic" viewBox="0 0 22 22"><path fill="currentColor" d="M17 3h2v16h-2zM7 3v16l9-8z"/></svg></button>
      </div>
    </div>
    <div class="grp end">
      <input class="num cur" aria-label="Current frame" value="82">
      <div class="seg range"><button class="lit" aria-label="Preview range"><svg class="ic"><use href="#stopwatch"/></svg></button><label class="lit">Start<input class="n1" value="1"></label><label class="lit">End<input class="n3" value="250"></label></div>
      <button class="tsr" disabled><svg class="ic"><use href="#stopwatch"/></svg>To Scene Range</button>
    </div>
  </div>
  <div class="tbody">
    <div class="ruler"><div class="cells"><span>0</span><span>10</span><span>20</span><span>30</span><span>40</span><span>50</span><span>60</span><span>70</span><span>80</span><span>90</span><span>100</span><span>110</span><span>120</span><span>130</span><span>140</span><span>150</span><span>160</span><span>170</span><span>180</span><span>190</span><span>200</span><span>210</span><span>220</span><span>230</span><span>240</span><span>250</span></div></div>
    <div class="tracks"><div class="cells lines"><i></i><i></i><i></i><i></i><i></i><i></i><i></i><i></i><i></i><i></i><i></i><i></i><i></i><i></i><i></i><i></i><i></i><i></i><i></i><i></i><i></i><i></i><i></i><i></i><i></i><i></i></div></div>
    <div class="headrail"><div class="playhead" style="left:33.46%"><b>82</b></div></div>
    <div class="hscroll"></div>
    <div class="vscroll"></div>
    <svg class="tab-l"><use href="#right"/></svg><svg class="tab-r"><use href="#left"/></svg>
  </div>
</section>
</div>

<div class="rightcol">
<section class="outliner">
  <div class="ohead">
    <button class="dd box" aria-label="Editor type"><svg class="ic"><use href="#tree"/></svg><svg class="ch"><use href="#down"/></svg></button>
    <button class="dd box" aria-label="Display mode"><svg class="ic"><use href="#layers"/></svg><svg class="ch"><use href="#down"/></svg></button>
    <label class="find os"><svg class="ic"><use href="#search"/></svg><input aria-label="Search outliner"></label>
    <button class="dd box" aria-label="Filter"><svg class="ic"><use href="#funnel"/></svg><svg class="ch"><use href="#down"/></svg></button>
    <button class="sq" aria-label="New collection"><svg class="ic"><use href="#newfolder"/></svg></button>
  </div>
  <ul class="tree">
    <li class="l0"><svg class="ic"><use href="#collection"/></svg><span>Scene Collection</span></li>
    <li class="l1"><svg class="tw"><use href="#tri-down"/></svg><svg class="ic sel"><use href="#collection"/></svg><span>Collection</span><div class="vis"><input type="checkbox" checked aria-label="Exclude Collection"><svg class="ic"><use href="#eye"/></svg><svg class="ic"><use href="#photo"/></svg></div></li>
    <li class="l2"><svg class="tw"><use href="#tri"/></svg><svg class="ic or"><use href="#arm"/></svg><span class="w1">Armature</span><svg class="ic gr"><use href="#pose"/></svg><svg class="ic gr"><use href="#pose2"/></svg><svg class="ic sel or"><use href="#tridata"/></svg><div class="vis"><svg class="ic"><use href="#eye"/></svg><svg class="ic"><use href="#photo"/></svg></div></li>
    <li class="l2"><svg class="tw"><use href="#tri"/></svg><svg class="ic or"><use href="#camera"/></svg><span class="w2">Camera</span><svg class="ic sel gr"><use href="#camera-o"/></svg><div class="vis"><svg class="ic"><use href="#eye"/></svg><svg class="ic"><use href="#photo"/></svg></div></li>
    <li class="l2"><svg class="tw"><use href="#tri"/></svg><svg class="ic or"><use href="#bulb"/></svg><span class="w3">Light</span><svg class="ic gr"><use href="#light-o"/></svg><div class="vis"><svg class="ic"><use href="#eye"/></svg><svg class="ic"><use href="#photo"/></svg></div></li>
    <li class="l1"><i class="tw"></i><svg class="ic"><use href="#collection"/></svg><span>Export</span><div class="vis"><input type="checkbox" checked aria-label="Exclude Export"><svg class="ic"><use href="#eye"/></svg><svg class="ic"><use href="#photo"/></svg></div></li>
  </ul>
</section>

<section class="properties">
  <div class="ohead">
    <button class="dd box" aria-label="Editor type"><svg class="ic"><use href="#props"/></svg><svg class="ch"><use href="#down"/></svg></button>
    <label class="find ps"><svg class="ic"><use href="#search"/></svg><input aria-label="Search properties"></label>
    <button class="sq dark" aria-label="Options"><svg class="ch"><use href="#down"/></svg></button>
  </div>
  <div class="pmain">
    <nav class="ptabs">
      <div><button aria-label="Tool"><svg><use href="#tools"/></svg></button></div>
      <div><button aria-label="Render"><svg><use href="#render"/></svg></button><button aria-label="Output"><svg><use href="#output"/></svg></button><button aria-label="View layer"><svg><use href="#layers"/></svg></button><button aria-label="Scene"><svg><use href="#scene"/></svg></button><button class="red" aria-label="World"><svg><use href="#world"/></svg></button></div>
      <div><button class="wh" aria-label="Collection"><svg><use href="#collection-o"/></svg></button></div>
      <div><button class="or" aria-label="Object"><svg><use href="#objdata"/></svg></button><button class="bl" aria-label="Modifiers"><svg><use href="#wrench"/></svg></button><button class="bl" aria-label="Particles"><svg><use href="#particles"/></svg></button><button class="bl" aria-label="Physics"><svg><use href="#physics"/></svg></button><button class="bl" aria-label="Constraints"><svg><use href="#constraint"/></svg></button><button class="gr on" aria-label="Data"><svg><use href="#mesh"/></svg></button><button class="red" aria-label="Material"><svg><use href="#material"/></svg></button></div>
      <div><button class="red" aria-label="Texture"><svg><use href="#texture"/></svg></button></div>
    </nav>
    <div class="pcontent">
      <div class="crumbs"><svg class="ic"><use href="#objdata"/></svg><span>ExampleHuman</span><svg class="i16 sep"><use href="#right"/></svg><svg class="ic"><use href="#mesh"/></svg><span>ExampleHuman</span><svg class="ic pin"><use href="#pin"/></svg></div>
      <div class="idblock data"><button class="dd" aria-label="Browse mesh"><svg class="ic"><use href="#mesh"/></svg><svg class="ch"><use href="#down"/></svg></button><input aria-label="Mesh name" value="ExampleHuman"><button class="act" aria-label="Fake user"><svg class="ic"><use href="#shield"/></svg></button></div>
      <div class="panel">
        <button class="ph"><svg class="i16"><use href="#down"/></svg>Vertex Groups<svg class="grip"><use href="#grip"/></svg></button>
        <div class="pbody">
          <div class="list">
            <div class="lrow"><ul>
<li><svg class="ic"><use href="#vg"/></svg>mixamorig:Hips<svg class="ic lk"><use href="#lock"/></svg></li>
<li><svg class="ic"><use href="#vg"/></svg>mixamorig:Spine<svg class="ic lk"><use href="#lock"/></svg></li>
<li><svg class="ic"><use href="#vg"/></svg>mixamorig:Spine1<svg class="ic lk"><use href="#lock"/></svg></li>
<li><svg class="ic"><use href="#vg"/></svg>mixamorig:Spine2<svg class="ic lk"><use href="#lock"/></svg></li>
<li><svg class="ic"><use href="#vg"/></svg>mixamorig:Neck<svg class="ic lk"><use href="#lock"/></svg></li>
<li><svg class="ic"><use href="#vg"/></svg>mixamorig:Head<svg class="ic lk"><use href="#lock"/></svg></li>
<li><svg class="ic"><use href="#vg"/></svg>mixamorig:LeftShoulder<svg class="ic lk"><use href="#lock"/></svg></li>
<li class="on"><svg class="ic"><use href="#vg"/></svg>mixamorig:LeftArm<svg class="ic lk"><use href="#lock"/></svg></li>
<li><svg class="ic"><use href="#vg"/></svg>mixamorig:LeftForeArm<svg class="ic lk"><use href="#lock"/></svg></li>
<li><svg class="ic"><use href="#vg"/></svg>mixamorig:LeftHand<svg class="ic lk"><use href="#lock"/></svg></li>
<li><svg class="ic"><use href="#vg"/></svg>mixamorig:LeftHandThumb1<svg class="ic lk"><use href="#lock"/></svg></li>
<li><svg class="ic"><use href="#vg"/></svg>mixamorig:LeftHandThumb2<svg class="ic lk"><use href="#lock"/></svg></li>
<li><svg class="ic"><use href="#vg"/></svg>mixamorig:LeftHandThumb3<svg class="ic lk"><use href="#lock"/></svg></li>
<li><svg class="ic"><use href="#vg"/></svg>mixamorig:LeftHandIndex1<svg class="ic lk"><use href="#lock"/></svg></li>
<li><svg class="ic"><use href="#vg"/></svg>mixamorig:LeftHandIndex2<svg class="ic lk"><use href="#lock"/></svg></li>
<li><svg class="ic"><use href="#vg"/></svg>mixamorig:LeftHandIndex3<svg class="ic lk"><use href="#lock"/></svg></li>
<li><svg class="ic"><use href="#vg"/></svg>mixamorig:LeftHandMiddle1<svg class="ic lk"><use href="#lock"/></svg></li>
<li><svg class="ic"><use href="#vg"/></svg>mixamorig:LeftHandMiddle2<svg class="ic lk"><use href="#lock"/></svg></li>
<li><svg class="ic"><use href="#vg"/></svg>mixamorig:LeftHandMiddle3<svg class="ic lk"><use href="#lock"/></svg></li>
<li><svg class="ic"><use href="#vg"/></svg>mixamorig:LeftHandRing1<svg class="ic lk"><use href="#lock"/></svg></li>
<li><svg class="ic"><use href="#vg"/></svg>mixamorig:LeftHandRing2<svg class="ic lk"><use href="#lock"/></svg></li>
<li><svg class="ic"><use href="#vg"/></svg>mixamorig:LeftHandRing3<svg class="ic lk"><use href="#lock"/></svg></li>
<li><svg class="ic"><use href="#vg"/></svg>mixamorig:LeftHandPinky1<svg class="ic lk"><use href="#lock"/></svg></li>
<li><svg class="ic"><use href="#vg"/></svg>mixamorig:LeftHandPinky2<svg class="ic lk"><use href="#lock"/></svg></li>
<li><svg class="ic"><use href="#vg"/></svg>mixamorig:LeftHandPinky3<svg class="ic lk"><use href="#lock"/></svg></li>
            </ul><div class="track"><div class="thumb t107"></div></div></div>
            <div class="lfoot"><svg class="ft"><use href="#tri"/></svg><svg class="grip"><use href="#grip"/></svg></div>
          </div>
          <div class="lbtns"><div><button aria-label="Add"><svg class="i16"><use href="#plus"/></svg></button><button aria-label="Remove"><svg class="i16"><use href="#minus"/></svg></button></div><div><button class="dk" aria-label="Specials"><svg class="i16"><use href="#down"/></svg></button></div><div><button aria-label="Up"><svg class="i12"><use href="#tri-up"/></svg></button><button aria-label="Down"><svg class="i12"><use href="#tri-down"/></svg></button></div></div>
        </div>
      </div>
      <div class="panel">
        <button class="ph"><svg class="i16"><use href="#down"/></svg>Shape Keys<svg class="grip"><use href="#grip"/></svg></button>
        <div class="pbody sk">
          <div class="list empty"><div class="lfoot"><svg class="ft"><use href="#tri"/></svg><svg class="grip"><use href="#grip"/></svg></div></div>
          <div class="lbtns"><div><button aria-label="Add"><svg class="i16"><use href="#plus"/></svg></button><button disabled aria-label="Remove"><svg class="i16"><use href="#minus"/></svg></button></div><div><button class="dk" aria-label="Specials"><svg class="i16"><use href="#down"/></svg></button></div></div>
        </div>
        <label class="ck rest"><input type="checkbox">Add Rest Position</label>
      </div>
      <div class="panel"><button class="ph"><svg class="i16"><use href="#right"/></svg>UV Maps<svg class="grip"><use href="#grip"/></svg></button></div>
      <div class="panel"><button class="ph"><svg class="i16"><use href="#right"/></svg>Color Attributes<svg class="grip"><use href="#grip"/></svg></button></div>
      <div class="panel"><button class="ph"><svg class="i16"><use href="#right"/></svg>Attributes<svg class="grip"><use href="#grip"/></svg></button></div>
      <div class="panel"><button class="ph"><svg class="i16"><use href="#right"/></svg>Normals<svg class="grip"><use href="#grip"/></svg></button></div>
      <div class="panel"><button class="ph"><svg class="i16"><use href="#right"/></svg>Texture Space<svg class="grip"><use href="#grip"/></svg></button></div>
    </div>
    <div class="pscroll"></div>
  </div>
</section>
</div>
</main>

<footer class="status">
  <svg class="ms" viewBox="0 0 16 22"><path class="ln" d="M8 1h4q3 0 3 4v12q0 4-3 4H4q-3 0-3-4v-5"/><path fill="currentColor" d="M0 10V4q0-4 4-4h3v10z"/></svg>
  <svg class="ms" viewBox="0 0 16 22"><rect class="ln" x="1" y="1" width="14" height="20" rx="3"/><path fill="currentColor" d="M6 4h4v8H6z"/></svg>
  <svg class="ms" viewBox="0 0 16 22"><path class="ln" d="M8 1H4Q1 1 1 5v12q0 4 3 4h8q3 0 3-4v-5"/><path fill="currentColor" d="M16 10V4q0-4-4-4H9v10z"/></svg>
  <p>Collection | ExampleHuman | Verts:60,270 | Faces:60,268 | Tris:120,536 | Objects:1/4 | VRAM: 3.2/12.0 GiB | 4.0.2</p>
</footer>

<footer class="taskbar">
  <button class="app win" aria-label="Start"><svg viewBox="0 0 36 36"><defs><linearGradient id="wg" x2="1" y2="1"><stop stop-color="#8be9ff"/><stop offset="1" stop-color="#0a84f0"/></linearGradient></defs><path fill="url(#wg)" d="M0 0h17v17H0zM19 0h17v17H19zM0 19h17v17H0zM19 19h17v17H19z"/></svg></button>
  <label class="tsearch"><svg viewBox="0 0 24 24"><circle cx="10" cy="10" r="8" fill="none" stroke="#eee" stroke-width="2.500"/><path stroke="#eee" stroke-width="3" d="M16 16l7 7"/></svg><input placeholder="Search" aria-label="Search">
    <svg class="gram" viewBox="0 0 60 40"><path fill="#c99a4b" d="M22 4q8-7 14 2 4 9 1 15l-6-2q-5-4-9-15z"/><path fill="#6b4820" d="M25 5q5-3 8 3 2 6 1 8-6-3-9-11z"/><path fill="#e8bd73" d="M35 18q5 2 4 8h-4q1-4-3-6z"/><path fill="#b56c5b" d="M24 27h22l3 10H22z"/><path fill="#d9a08f" d="M24 26h22v4H24z"/><g fill="#b6a9c9"><path d="M3 10l5-2v3l-3 1v9a2.500 2 0 1 1-2-2zM9 24l8-3v12a2.500 2 0 1 1-2-2v-6l-4 1.500v8a2.500 2 0 1 1-2-2zM51 8l5-4v3l-3 2v8a2.500 2 0 1 1-2-2z"/></g></svg></label>
  <button class="app" aria-label="Task view"><svg viewBox="0 0 36 36"><path fill="#777" d="M0 10h26v25H0z"/><path fill="#eee" d="M9 0h27v25H9z"/><path fill="#aaa" d="M9 10h17v15H9z"/></svg></button>
  <button class="app badge" aria-label="Weather"><svg viewBox="0 0 46 44"><path fill="#9fc4f5" d="M1 20q-1-8 5-8 1-9 10-9v17z"/><circle cx="19" cy="27" r="14.500" fill="#f58a24"/><path fill="#bcd6fa" d="M15 40q-3-9 5-10 2-8 9-6 6 2 5 7 5 4 1 9z"/><circle cx="30" cy="14" r="15" fill="#2b2b2b"/><text class="wt" x="31" y="19">59°</text></svg></button>
  <button class="app run" aria-label="Notepad++"><svg viewBox="0 0 36 36"><path fill="#f2f2f2" d="M2 3h25v32H2z"/><path stroke="#999" stroke-width="2" stroke-dasharray="2 2" d="M3 4h24"/><path fill="#7bc943" d="M3 17q8-8 20-4l4 6v14H4z"/><path fill="#2f6b1f" d="M7 22q7-6 14 0l-3 7q-7 3-10-2z"/><path stroke="#c98b3a" stroke-width="3" d="M34 1l-8 21"/></svg></button>
  <button class="app run" aria-label="File Explorer"><svg viewBox="0 0 36 36"><path fill="#e0a113" d="M0 3q0-2 2-2h10l4 4h18q2 0 2 2v8H0z"/><path fill="#ffd04c" d="M0 9h36v24q0 2-2 2H2q-2 0-2-2z"/><path fill="#1783d8" d="M6 35V26q0-3 3-3h18q3 0 3 3v9z"/><path fill="#0a5ca8" d="M12 28h12v2H12z"/></svg></button>
  <button class="app run" aria-label="Chrome Canary"><svg viewBox="0 0 36 36"><circle cx="18" cy="18" r="18" fill="#f9ab00"/><path fill="#ffd666" d="M18 9h16a18 18 0 0 1-18 27l7-12z"/><circle cx="18" cy="18" r="8.500" fill="#fff"/><circle cx="18" cy="18" r="6.800" fill="#fbbc04"/></svg></button>
  <button class="app" aria-label="Media player"><svg viewBox="0 0 36 36"><circle cx="18" cy="18" r="15.500" fill="#6a1a72" stroke="#d9c9dc" stroke-width="1.500"/><circle cx="18" cy="18" r="8" fill="#e8dcea"/><path fill="#4a1050" d="M15 13l8 5-8 5z"/></svg></button>
  <button class="app run act" aria-label="Blender"><svg viewBox="0 0 36 36"><use href="#blender-color"/></svg></button>
  <button class="app run badge" aria-label="Discord"><svg viewBox="0 0 46 44"><circle cx="22" cy="24" r="18" fill="#5865f2"/><path fill="#fff" d="M14 16q8-4 16 0 5 8 4 15-3 3-6 3l-2-3h-8l-2 3q-3 0-6-3-1-7 4-15z"/><circle cx="18" cy="26" r="2.200" fill="#5865f2"/><circle cx="26" cy="26" r="2.200" fill="#5865f2"/><circle cx="35" cy="11" r="10.500" fill="#ed4e4e"/><circle cx="35" cy="11" r="4.500" fill="#fff"/></svg></button>
  <button class="app run" aria-label="Game controller"><svg viewBox="0 0 36 36"><defs><linearGradient id="gg" x2="1" y2="1"><stop offset=".2" stop-color="#4ea0e8"/><stop offset="1" stop-color="#f010ff"/></linearGradient></defs><path fill="url(#gg)" d="M8 10h20q4 0 5 6l3 15q-3 4-7-2l-4-6H11l-4 6q-4 6-7 2l3-15q1-6 5-6z"/><path fill="#3d7fd0" d="M12 4l5-1v6h-5zM18 3l5-2v8h-5zM12 10h5v5h-5zM18 10h5v6l-5-1z"/></svg></button>
  <button class="app run" aria-label="Epic Games"><svg viewBox="0 0 36 38"><path fill="#080808" d="M2 3q0-3 3-3h26q3 0 3 3v27L18 38 2 30z"/><text class="e1" x="18" y="18">EPIC</text><text class="e2" x="18" y="28">GAMES</text></svg></button>
  <div class="tray">
    <svg viewBox="0 0 18 18"><path fill="none" stroke="#fff" stroke-width="2" d="M1 13l8-8 8 8"/></svg>
    <svg class="wifi" viewBox="0 0 24 20"><path fill="none" stroke="#777" stroke-width="2" d="M1 7q11-9 22 0"/><path fill="none" stroke="#fff" stroke-width="2" d="M4 11q8-7 16 0M7.500 14.500q4.500-4 9 0"/><circle cx="12" cy="18" r="2" fill="#fff"/></svg>
    <svg class="vol" viewBox="0 0 26 22"><path fill="none" stroke="#fff" stroke-width="1.800" d="M1 8h4l6-5v16l-6-5H1zM14 8q2 3 0 6M17.500 5q4.500 6 0 12M21 2.500q7 8.500 0 17"/></svg>
    <p class="clk">5:15 PM<br>2/4/2024</p>
    <svg class="bell" viewBox="0 0 20 20"><path fill="#ff9f8c" d="M10 0q7 0 7 8v4l3 4H0l3-4V8q0-8 7-8zM7 17h6q-1 3-3 3t-3-3z"/></svg>
  </div>
</footer>

<section class="dialog" role="dialog" aria-label="Blender File View">
  <header class="dtitle"><svg class="ic"><use href="#blender-color"/></svg><h2>Blender File View</h2><div class="wincontrols"><button aria-label="Minimize"><svg class="i16"><use href="#minus"/></svg></button><button aria-label="Maximize"><svg class="i16"><use href="#max"/></svg></button><button aria-label="Close"><svg class="i16"><use href="#cross"/></svg></button></div></header>
  <div class="dbody">
    <div class="dside">
      <div class="panel">
        <button class="ph"><svg class="i16"><use href="#down"/></svg>Bookmarks<svg class="grip"><use href="#grip"/></svg></button>
        <div class="pbody">
          <div class="list"><ul class="pad">
            <li><svg class="ic"><use href="#folder"/></svg>ImageEditor Doccuments</li><li class="dis"><svg class="ic"><use href="#folder"/></svg>Serenitatem</li><li class="dis"><svg class="ic"><use href="#folder"/></svg>textures</li><li><svg class="ic"><use href="#folder"/></svg>Blender</li><li><svg class="ic"><use href="#folder"/></svg>Blender Documents</li><li class="dis"><svg class="ic"><use href="#folder"/></svg>Blender Doccuments</li><li><svg class="ic"><use href="#folder"/></svg>export</li><li><svg class="ic"><use href="#folder"/></svg>Serenitatem</li>
          </ul><div class="lfoot"><svg class="ft"><use href="#tri"/></svg><svg class="grip"><use href="#grip"/></svg></div></div>
          <div class="lbtns"><div><button aria-label="Add bookmark"><svg class="i16"><use href="#plus"/></svg></button><button aria-label="Remove bookmark"><svg class="i16"><use href="#minus"/></svg></button><button class="dk" aria-label="Specials"><svg class="i16"><use href="#down"/></svg></button></div><div><button disabled aria-label="Up"><svg class="i12"><use href="#tri-up"/></svg></button><button disabled aria-label="Down"><svg class="i12"><use href="#tri-down"/></svg></button></div></div>
        </div>
      </div>
      <div class="panel">
        <button class="ph"><svg class="i16"><use href="#down"/></svg>System<svg class="grip"><use href="#grip"/></svg></button>
        <div class="pbody"><div class="list sys"><div class="lrow"><ul>
          <li><svg class="ic"><use href="#home"/></svg>Home</li><li><svg class="ic"><use href="#desktop"/></svg>Desktop</li><li><svg class="ic"><use href="#documents"/></svg>Documents</li><li><svg class="ic"><use href="#download"/></svg>Downloads</li><li><svg class="ic"><use href="#music"/></svg>Music</li><li><svg class="ic"><use href="#picture"/></svg>Pictures</li><li><svg class="ic"><use href="#video"/></svg>Videos</li><li><svg class="ic"><use href="#font"/></svg>Fonts</li><li><svg class="ic"><use href="#globe"/></svg>OneDrive</li><li><svg class="ic"><use href="#folder"/></svg>Painter</li>
        </ul><div class="track"><div class="thumb t223"></div></div></div><div class="lfoot"><svg class="ft"><use href="#tri"/></svg><svg class="grip"><use href="#grip"/></svg></div></div></div>
      </div>
      <div class="panel">
        <button class="ph"><svg class="i16"><use href="#down"/></svg>Volumes<svg class="grip"><use href="#grip"/></svg></button>
        <div class="pbody"><div class="list sys"><ul class="pad">
          <li><svg class="ic"><use href="#disc"/></svg>B:\</li><li><svg class="ic"><use href="#drive"/></svg>Local Disk (C:)</li><li><svg class="ic"><use href="#drive"/></svg>Data Drive (D:)</li><li><svg class="ic"><use href="#drive"/></svg>Backup Drive (F:)</li>
        </ul><div class="lfoot"><svg class="ft"><use href="#tri"/></svg><svg class="grip"><use href="#grip"/></svg></div></div></div>
      </div>
      <div class="panel">
        <button class="ph"><svg class="i16"><use href="#down"/></svg>Recent<svg class="grip"><use href="#grip"/></svg></button>
        <div class="pbody"><div class="list"><div class="lrow"><ul>
          <li class="on"><svg class="ic"><use href="#folder"/></svg>weights</li><li><svg class="ic"><use href="#drive"/></svg>Data Drive (D:)</li><li><svg class="ic"><use href="#folder"/></svg>ExampleHuman</li><li><svg class="ic"><use href="#folder"/></svg>L2</li><li><svg class="ic"><use href="#folder"/></svg>morphs</li><li><svg class="ic"><use href="#folder"/></svg>L1</li>
        </ul><div class="track"><div class="thumb full"></div></div></div></div>
        <div class="lbtns"><div><button class="dk" aria-label="Specials"><svg class="i16"><use href="#down"/></svg></button></div></div></div>
      </div>
    </div>
    <div class="dscroll"></div>
    <div class="dmain">
      <div class="dtools">
        <div class="seg big"><button class="lit" aria-label="Back"><svg class="ic"><use href="#arrow-l"/></svg></button><button class="lit" aria-label="Forward"><svg class="ic"><use href="#arrow-r"/></svg></button><button class="lit" aria-label="Parent"><svg class="ic"><use href="#arrow-u"/></svg></button><button class="lit" aria-label="Refresh"><svg class="ic"><use href="#refresh"/></svg></button></div>
        <div class="seg big"><button class="lit" aria-label="New folder"><svg class="ic"><use href="#newfolder"/></svg></button></div>
        <input class="path" aria-label="Directory" value="C:\Users\Sean Buckley\Documents\Blender Documents\CharmorphTutorial\ExampleHuman\weights\">
        <label class="find fs"><svg class="ic"><use href="#search"/></svg><input aria-label="Search files"></label>
        <div class="seg big"><button class="on" aria-label="Vertical list"><svg class="ic"><use href="#listv"/></svg></button><button class="lit" aria-label="Horizontal list"><svg class="ic"><use href="#listh"/></svg></button><button class="lit" aria-label="Thumbnails"><svg class="ic"><use href="#thumbs"/></svg></button><button aria-label="Display options"><svg class="i16"><use href="#down"/></svg></button></div>
        <div class="seg big"><button class="on" aria-label="Filter"><svg class="ic"><use href="#funnel"/></svg></button><button aria-label="Filter options"><svg class="i16"><use href="#down"/></svg></button></div>
        <div class="seg big"><button class="on" aria-label="Options"><svg class="ic"><use href="#gear"/></svg></button></div>
      </div>
      <div class="dsplit">
        <div class="files">
          <div class="fhead"><button class="c1">Name</button><button class="c2">Date Modified<svg class="i12"><use href="#tri-down"/></svg></button><button class="c3">Size</button></div>
          <div class="frows"><div class="fscroll"></div></div>
        </div>
        <div class="dopts">
          <div><label for="prec">Precision</label><select id="prec"><option>32 bits</option></select></div>
          <div><label for="rgx">VG regex</label><input id="rgx" value="^mixamorig:"></div>
        </div>
      </div>
      <div class="dfoot">
        <div class="fname"><input aria-label="File name" value="mixamo.npz"><button aria-label="Decrement"><svg class="i16"><use href="#minus"/></svg></button><button aria-label="Increment"><svg class="i16"><use href="#plus"/></svg></button></div>
        <button class="go">Export VGs</button><button class="cancel">Cancel</button>
      </div>
    </div>
  </div>
</section>
</div>
<script src="script.js"></script>
</body>
</html>
```
FILE: styles.css
```css
* { box-sizing: border-box; margin: 0; padding: 0; }
body { background: #181818; color: #c8c8c8; font: 17px/20px Inter, "Liberation Sans", sans-serif; overflow: hidden; }
button, input, select { font: inherit; color: inherit; background: none; border: 0; outline: 0; }
button { display: flex; align-items: center; justify-content: center; white-space: nowrap; }
input { min-width: 0; }
ul { list-style: none; }
.sprite { position: absolute; width: 0; height: 0; }
svg { display: block; flex: none; }
.ln { fill: none; stroke: currentColor; stroke-width: 1.5; }
.ic { width: 22px; height: 22px; }
.i16 { width: 16px; height: 16px; }
.i12 { width: 12px; height: 12px; }
.ch { width: 12px; height: 12px; }
.grip { width: 16px; height: 8px; color: #a0a0a0; }
.or { color: #c4803f; }
.gr { color: #0bab80; }

.app { position: relative; min-height: 100vh; display: flex; flex-direction: column; }
.titlebar { height: 34px; background: #2e1a1a; display: flex; align-items: center; padding-left: 2px; color: #fff; }
.titlebar h1, .dtitle h2 { font: 17px/20px "Open Sans", sans-serif; white-space: nowrap; margin-left: 6px; }
.titlebar .ic { width: 24px; height: 24px; }
.wincontrols { margin-left: auto; display: flex; }
.wincontrols button { width: 70px; height: 34px; }
.wincontrols .ln { stroke-width: 1; }

.topbar { height: 40px; display: flex; align-items: center; padding: 0 12px; color: #d4d4d4; }
.logo { width: 26px; height: 26px; }
.menus { display: flex; }
.topbar .menus { margin-left: 3px; width: 419px; }
.menus button { padding: 0 11px; }
.topbar .menus button { padding: 0 10px 0 11px; }
.workspaces { display: flex; align-self: flex-end; height: 32px; padding-bottom: 2px; color: #8f8f8f; margin-left: 12px; gap: 2px; }
.workspaces button { padding: 0 13px; background: #1d1d1d; border-radius: 6px 6px 0 0; }
.workspaces .on { background: #303030; color: #fff; }
.workspaces button:last-child { padding: 0 6px; }
.datablocks { margin-left: auto; display: flex; gap: 9px; }
.idblock { display: flex; height: 28px; border: 1px solid #3d3d3d; border-radius: 6px; background: #1d1d1d; color: #d8d8d8; overflow: hidden; align-items: center; }
.idblock.scene, .idblock.layer { width: 277px; }
.idblock input { flex: 1; padding: 0 11px; height: 26px; }
.idblock .dd { width: 45px; height: 26px; background: #282828; border-right: 1px solid #3d3d3d; gap: 3px; padding: 0; }
.idblock .act { width: 29px; height: 26px; background: #545454; }
.idblock .off { width: 28px; height: 26px; background: #262626; color: #555; }
.idblock .pin, .crumbs .pin { color: #808080; }
.idblock .pin { margin-right: 6px; }

.areas { flex: 1; display: flex; gap: 3px; padding-right: 2px; min-height: 0; }
.leftcol { flex: 1; min-width: 0; display: flex; flex-direction: column; gap: 3px; }
.rightcol { width: 663px; display: flex; flex-direction: column; gap: 3px; min-height: 0; }

.viewport { position: relative; flex: 1; display: flex; flex-direction: column; border-radius: 8px; overflow: hidden; background: #383838; min-height: 0; }
.canvas { position: absolute; inset: 0; width: 100%; height: 100%; }
.vhead, .vtool, .vbody { position: relative; }
.vhead { height: 38px; display: flex; align-items: center; padding: 0 12px 1px; background: rgba(52,52,52,.75); color: #d8d8d8; }
.grp { display: flex; align-items: center; gap: 9px; }
.grp.start, .grp.end { flex: 1; }
.grp.end { justify-content: flex-end; }
.grp.mid { margin-right: 29px; }
.dd { gap: 2px; height: 27px; padding: 0 4px; }
.box, .seg { height: 27px; border-radius: 6px; background: #282828; }
.box { border: 1px solid #3d3d3d; }
.seg { display: flex; overflow: hidden; outline: 1px solid #3d3d3d; outline-offset: -1px; }
.seg button { height: 27px; width: 28px; }
.seg button + button { border-left: 1px solid #3d3d3d; }
.seg .dd { width: 44px; }
.on { background: #4772b3; color: #fff; }
.lit { background: #545454; color: #d8d8d8; }
.dim { opacity: .6; }
.dim2 { color: #555; }
.box.mode { gap: 9px; width: 156px; }
.box.mode .ch, .retopo .ch, .global .ch, .options .ch { margin-left: auto; }
.vm { margin-left: -2px; }
.vm + .retopo { margin-left: -11px; }
.retopo { width: 202px; padding-left: 10px; }
.global { width: 114px; gap: 8px; }
.vtool { height: 38px; display: flex; justify-content: space-between; align-items: flex-start; padding: 5px 11px; background: rgba(52,52,52,.3); color: #d8d8d8; }
.options { width: 98px; padding-left: 11px; }
.vbody { flex: 1; display: flex; min-height: 0; }
.toolbar { padding: 12px 0 0 13px; display: flex; flex-direction: column; gap: 8px; }
.tgroup { border-radius: 6px; overflow: hidden; background: #3d3d3d; display: flex; flex-direction: column; gap: 1px; }
.tgroup button { width: 58px; height: 49px; background: #282828; }
.tgroup .on { background: #4772b3; }
.tgroup svg { width: 36px; height: 36px; }
.vinfo { margin-left: 26px; padding-top: 10px; line-height: 27px; color: #fff; flex: 1; }
.navcol { width: 150px; padding-top: 10px; display: flex; flex-direction: column; }
.axisgizmo { width: 128px; height: 126px; }
.axl text { font: 600 16px Inter, sans-serif; text-anchor: middle; fill: #0f1a10; }
.navcol button { width: 40px; height: 40px; margin: 0 0 5px 85px; border-radius: 50%; background: #2b2b2b; color: #e6e6e6; }
.navcol button svg { width: 24px; height: 24px; }

.npanel { width: 384px; background: #3d3d3d; overflow: hidden; color: #c8c8c8; border-radius: 0 0 6px 6px; text-shadow: 0 1px 2px rgba(0,0,0,.4); }
.nbody { background: #353535; padding: 0 13px; }
.nbody.first { margin-top: -18px; padding-bottom: 12px; }
.row { height: 36px; display: flex; align-items: center; white-space: nowrap; }
.row.sp { margin-top: 19px; }
.row.r32 { height: 32px; }
.row.r26 { height: 26px; }
.row.sp + .row.r32 { height: 36px; }
.row label:not(.ck) { width: 89px; }
.row .ra { width: 70px; text-align: right; }
.row .val { margin-left: 14px; }
.row select { flex: 1; }
select { appearance: none; height: 27px; padding: 0 10px; border: 1px solid #3d3d3d; border-radius: 6px; color: #e0e0e0; background: #282828 url("data:image/svg+xml,%3Csvg xmlns='http://www.w3.org/2000/svg' width='12' height='12' viewBox='0 0 16 16'%3E%3Cpath d='M2 5l6 6 6-6' fill='none' stroke='%23ccc' stroke-width='2'/%3E%3C/svg%3E") no-repeat right 4px center; }
select:disabled { opacity: .4; }
.dis { color: #757575; }
.btn { position: relative; width: 100%; height: 27px; border-radius: 5px; background: #545454; color: #e0e0e0; }
.btn:disabled, .tsr:disabled { background: #434343; color: #808080; }
.iconic { padding-left: 26px; }
.reload { align-items: flex-end; height: 32px; }
.bicon { position: absolute; left: 8px; }
.ck { display: flex; align-items: center; gap: 5px; color: #e0e0e0; }
.ck.dis { color: #808080; }
input[type=checkbox] { appearance: none; width: 19px; height: 19px; border-radius: 4px; background: #545454; }
input[type=checkbox]:disabled { background: #434343; }
input[type=checkbox]:checked { background: #4772b3 url("data:image/svg+xml,%3Csvg xmlns='http://www.w3.org/2000/svg' viewBox='0 0 16 16'%3E%3Cpath d='M3 8l3.500 4L13 3' fill='none' stroke='%23fff' stroke-width='2'/%3E%3C/svg%3E") center / 16px; }
.ctr { justify-content: center; }
.nh { width: 100%; height: 36px; justify-content: flex-start; gap: 5px; padding: 0 10px; color: #e6e6e6; }
.nh.sub { padding-left: 30px; }
.nh.top { margin-top: 3px; }
.nh .grip, .ph .grip { margin-left: auto; }
.msg { padding-top: 8px; padding-bottom: 9px; line-height: 36px; }
.msg .tight { line-height: 28px; }
.msg .in { padding-left: 4px; }
.io { padding-top: 7px; padding-bottom: 10px; display: flex; flex-direction: column; gap: 15px; }
.vtabs { margin-left: 12px; width: 29px; background: #181818; padding-top: 6px; display: flex; flex-direction: column; align-items: flex-start; gap: 7px; font-size: 16px; }
.vtabs button { writing-mode: vertical-rl; width: 27px; padding: 11px 0; border: 1px solid #3d3d3d; border-left: 0; border-radius: 0 6px 6px 0; background: #1d1d1d; color: #b0b0b0; }
.vtabs .on { background: #303030; color: #fff; }

.timeline { border-radius: 8px; overflow: hidden; background: #303030; }
.thead { height: 37px; display: flex; align-items: center; padding: 0 12px; color: #d8d8d8; }
.pk { width: 198px; }
.pk button { justify-content: space-between; padding: 0 4px 0 10px; }
.pk .dd:first-child { flex: 109; }
.pk .dd:last-child { flex: 89; }
.tm { margin-left: -6px; }
.grp.play { margin-right: 29px; gap: 10px; }
.transport { width: 172px; }
.transport button { flex: 1; }
.num { width: 106px; height: 27px; background: #545454; border-radius: 6px; text-align: center; }
.range { width: 284px; }
.range label { display: flex; flex: 1; align-items: center; justify-content: center; border-left: 1px solid #3d3d3d; gap: 18px; }
.range .n1 { width: 32px; text-align: right; }
.range .n3 { width: 34px; }
.tsr { width: 178px; height: 27px; border-radius: 6px; gap: 10px; }
.tbody { position: relative; height: 114px; background: #212121; display: flex; flex-direction: column; }
.ruler { height: 35px; background: #1d1d1d; color: #a0a0a0; line-height: 37px; }
.cells { display: flex; padding: 0 57px 0 47px; }
.cells > * { flex: 1; text-align: center; min-width: 0; }
.tracks { flex: 1; }
.lines { height: 100%; margin: 0 57px 0 47px; padding: 0; background: linear-gradient(90deg, #212121 2.3%, #303030 2.3%, #303030 98.08%, #212121 98.08%); }
.lines i { border-left: 1px solid #292929; background: linear-gradient(#191919, #191919) center / 1px 100% no-repeat; }
.headrail { position: absolute; inset: 0 57px 0 47px; }
.playhead { position: absolute; top: 4px; bottom: 0; width: 2px; background: #4772b3; }
.playhead b { display: block; width: 35px; height: 27px; margin-left: -17px; border-radius: 5px; background: #4772b3; color: #fff; font-weight: 400; line-height: 28px; text-align: center; }
.hscroll { position: absolute; left: 12px; right: 13px; bottom: 2px; height: 13px; border-radius: 7px; background: #545454; }
.vscroll { position: absolute; right: 2px; top: 14px; width: 6px; height: 70px; border-radius: 3px; background: #333; }
.tab-l, .tab-r { position: absolute; top: 22px; width: 14px; height: 18px; color: #888; }
.tab-l { left: -3px; }
.tab-r { right: -3px; }

.outliner { flex: 637 1 0; background: #282828; border-radius: 8px; overflow: hidden; min-height: 0; display: flex; flex-direction: column; }
.ohead { height: 39px; display: flex; align-items: center; gap: 9px; padding: 0 10px 2px 11px; background: #282828; flex: none; }
.find { display: flex; align-items: center; height: 28px; border: 1px solid #3d3d3d; border-radius: 6px; background: #1d1d1d; padding: 0 6px; }
.find input { flex: 1; height: 26px; }
.os { width: 174px; margin: 0 auto 0 112px; }
.sq { width: 28px; height: 27px; border-radius: 5px; background: #545454; }
.sq.dark { background: #282828; border: 1px solid #3d3d3d; }
.tree { flex: 1; background: repeating-linear-gradient(#282828 0 29px, #2b2b2b 29px 58px); }
.tree li { height: 29px; display: flex; align-items: center; gap: 6px; padding-right: 16px; }
.tree span { margin-left: 1px; }
.tree .l0 { padding-left: 33px; }
.tree .l1 { padding-left: 37px; }
.tree .l2 { padding-left: 67px; }
.tree .tw { width: 11px; height: 11px; margin-right: 8px; }
.tree .sel { background-color: #4c4c4c; box-shadow: 0 0 0 3px #4c4c4c; border-radius: 3px; }
.tree .w1 { width: 101px; }
.tree .w2 { width: 87px; }
.tree .w3 { width: 67px; }
.tree .vis { margin-left: auto; display: flex; gap: 8px; align-items: center; color: #d8d8d8; }
.tree input[type=checkbox]:checked { width: 18px; height: 18px; border-radius: 2px; background: #d8d8d8 url("data:image/svg+xml,%3Csvg xmlns='http://www.w3.org/2000/svg' viewBox='0 0 16 16'%3E%3Cpath d='M3 8l3.500 4L13 3' fill='none' stroke='%23222' stroke-width='2'/%3E%3C/svg%3E") center / 16px; }

.properties { flex: 1344 1 0; background: #303030; border-radius: 8px; overflow: hidden; min-height: 0; display: flex; flex-direction: column; }
.properties .ohead { background: #303030; height: 36px; padding-bottom: 1px; }
.ps { width: 174px; margin: 0 auto 0 183px; }
.pmain { flex: 1; display: flex; min-height: 0; }
.ptabs { width: 43px; background: #1d1d1d; padding: 12px 0 0 5px; display: flex; flex-direction: column; gap: 11px; color: #a6a6a6; }
.ptabs button { width: 38px; height: 40px; border-radius: 6px 0 0 6px; background: none; }
.ptabs button.on { background: #303030; }
.ptabs svg { width: 22px; height: 22px; }
.ptabs .or { color: #c4803f; }
.ptabs .gr { color: #00d6a3; }
.ptabs .bl { color: #5b84d6; }
.ptabs .red { color: #b3535a; }
.ptabs .wh { color: #d8d8d8; }
.pcontent { flex: 1; padding: 0 0 0 11px; min-width: 0; display: flex; flex-direction: column; gap: 2px; }
.pcontent > * { flex: none; }
.crumbs { height: 53px; display: flex; align-items: center; padding: 0 1px 0 5px; }
.crumbs span { margin-left: 12px; }
.crumbs .sep { margin: 0 12px 0 14px; }
.crumbs .pin { margin-left: auto; }
.idblock.data { margin: 10px 0 13px 2px; }
.panel { background: #3d3d3d; border-radius: 6px; flex: none; text-shadow: 0 1px 2px rgba(0,0,0,.4); }
.ph { width: 100%; height: 36px; justify-content: flex-start; gap: 5px; padding: 2px 10px 0; color: #e6e6e6; }
.pbody { display: flex; gap: 14px; padding: 13px; align-items: flex-start; }
.list { flex: 1; background: #2d2d2d; border-radius: 5px; display: flex; flex-direction: column; min-width: 0; }
.lrow { display: flex; padding-right: 7px; gap: 13px; }
.lrow ul { flex: 1; padding: 7px 0 0 7px; }
.pad { padding: 7px 13px 0 7px; }
.list li { height: 27px; margin-bottom: 2px; display: flex; align-items: center; gap: 10px; padding: 0 3px 0 6px; border-radius: 5px; white-space: nowrap; }
.list .on { background: #4772b3; color: #fff; }
.sys li { padding-left: 3px; gap: 13px; }
.lk { margin-left: auto; }
.track { width: 14px; margin-top: 6px; border: 1px solid #3a3a3a; border-radius: 7px; }
.thumb { background: #545454; border-radius: 7px; margin: -1px; }
.t107 { height: 107px; }
.t223 { height: 223px; }
.full { height: 100%; }
.lfoot { height: 19px; display: flex; align-items: flex-start; padding: 1px 0 0 15px; color: #c8c8c8; }
.lfoot .ft { width: 10px; height: 9px; }
.lfoot .grip { margin: 3px auto 0; color: #b0b0b0; }
.empty { height: 113px; justify-content: flex-end; }
.lbtns { width: 27px; display: flex; flex-direction: column; gap: 10px; }
.lbtns > div { border-radius: 5px; overflow: hidden; display: flex; flex-direction: column; gap: 1px; }
.lbtns button { width: 27px; height: 28px; background: #545454; color: #e6e6e6; }
.lbtns button:disabled { background: #484848; color: #808080; }
.lbtns .dk { background: #282828; }
.sk { padding-bottom: 0; }
.rest { padding: 13px 13px 17px; }
.pscroll { width: 6px; margin: 15px 1px 0 4px; height: 978px; border-radius: 3px; background: #444; }

.status { height: 34px; display: flex; align-items: center; padding: 0 20px 0 17px; color: #8f8f8f; border-bottom: 2px solid #555; }
.ms { width: 16px; height: 22px; margin-right: 334px; }
.status p { margin-left: auto; }
.taskbar { height: 69px; display: flex; align-items: center; padding: 0 32px 1px 17px; background: linear-gradient(90deg, #4c1113 0 6.5%, #232323 8.5% 38%, #431315 55% 66%, #232023 78%, #202124); color: #fff; font: 17px/25px "Open Sans", sans-serif; }
.taskbar .app { position: relative; min-height: 0; flex: none; width: 64px; height: 60px; margin-right: 2px; display: flex; flex-direction: row; border-radius: 6px; }
.taskbar .app svg { width: 36px; height: 36px; }
.taskbar .badge svg { width: 46px; height: 44px; margin-bottom: 8px; }
.taskbar .win { margin-right: 6px; }
.tsearch { width: 328px; height: 48px; border-radius: 24px; background: rgba(255,255,255,.12); border: 1px solid rgba(255,255,255,.16); display: flex; align-items: center; padding: 0 10px 0 17px; gap: 14px; margin-right: 5px; font-size: 20px; }
.tsearch svg { width: 22px; height: 22px; }
.tsearch input { flex: 1; }
.tsearch input::placeholder { color: #d8c8c8; opacity: 1; }
.tsearch .gram { width: 60px; height: 40px; }
.run::after { content: ""; position: absolute; bottom: 2px; left: 28px; width: 8px; height: 5px; border-radius: 3px; background: #999; }
.act.app { background: #333; box-shadow: 0 0 0 1px #3d3d3d; }
.act::after { left: 20px; width: 24px; background: #f0605c; }
.wt { font: 600 14px "Open Sans", sans-serif; text-anchor: middle; fill: #fff; }
.e1, .e2 { font: 700 13px Roboto, sans-serif; text-anchor: middle; fill: #fff; }
.e2 { font-size: 8px; }
.tray { margin-left: auto; display: flex; align-items: center; }
.tray svg { width: 18px; height: 18px; }
.tray .wifi { width: 24px; height: 20px; margin-left: 26px; }
.tray .vol { width: 26px; height: 22px; margin-left: 12px; }
.clk { text-align: right; margin: 0 11px 0 26px; }
.tray .bell { width: 20px; height: 20px; }

.dialog { position: absolute; left: 316px; top: 443px; width: 2157px; height: 1171px; display: flex; flex-direction: column; background: #303030; border: 2px solid #484848; border-radius: 14px; overflow: hidden; box-shadow: 0 30px 60px rgba(0,0,0,.45); }
.dtitle { height: 42px; flex: none; background: #202020; display: flex; align-items: center; padding: 0 0 2px 10px; color: #808080; }
.dtitle h2 { margin-left: 5px; }
.dbody { flex: 1; display: flex; min-height: 0; }
.dside { width: 346px; padding: 2px 0 0 10px; display: flex; flex-direction: column; gap: 2px; overflow: hidden; }
.dscroll { width: 6px; margin: 14px 3px 152px 4px; border-radius: 3px; background: #3d3d3d; }
.dmain { flex: 1; display: flex; flex-direction: column; min-width: 0; }
.dtools { height: 60px; display: flex; align-items: center; gap: 14px; padding: 0 13px; color: #e0e0e0; }
.seg.big { height: 37px; }
.seg.big button { width: 36px; height: 37px; }
.dtools .path { flex: 822 1 0; height: 37px; border: 1px solid #3d3d3d; border-radius: 6px; background: #1d1d1d; padding: 0 0 0 9px; }
.dtools .fs { flex: 426 1 0; height: 37px; }
.dsplit { flex: 1; display: flex; }
.files { flex: 1; display: flex; flex-direction: column; }
.fhead { height: 33px; display: flex; align-items: center; border-top: 1px solid #1d1d1d; border-bottom: 1px solid #1d1d1d; background: #333; color: #e6e6e6; }
.fhead button { height: 20px; justify-content: flex-start; padding-left: 14px; }
.fhead .c1 { flex: 1; }
.fhead .c2 { width: 191px; border-left: 1px solid #1d1d1d; }
.c2 svg { margin: 0 9px 0 auto; color: #a0a0a0; }
.fhead .c3 { width: 135px; border-left: 1px solid #1d1d1d; }
.frows { flex: 1; background: repeating-linear-gradient(#272727 0 28px, #2a2a2a 28px 56px); border-right: 1px solid #111; display: flex; justify-content: flex-end; }
.fscroll { width: 6px; margin: 13px 3px; border-radius: 3px; background: #3d3d3d; }
.dopts { width: 360px; padding: 13px 12px; display: flex; flex-direction: column; gap: 9px; }
.dopts div { display: flex; align-items: center; justify-content: flex-end; gap: 15px; }
.dopts select, .dopts input { width: 194px; height: 27px; }
.dopts input { border: 1px solid #3d3d3d; border-radius: 6px; background: #1d1d1d; padding: 0 10px; color: #e0e0e0; }
.dfoot { height: 60px; display: flex; align-items: center; gap: 14px; padding: 0 13px; color: #e6e6e6; }
.fname { flex: 1; height: 36px; display: flex; align-items: center; border: 1px solid #3d3d3d; border-radius: 6px; background: #1d1d1d; padding: 0 3px 0 9px; }
.fname input { flex: 1; }
.fname button { width: 30px; height: 30px; }
.go, .cancel { width: 182px; height: 36px; border-radius: 6px; background: #4772b3; color: #fff; }
.cancel { background: #545454; color: #e6e6e6; }
```
FILE: script.js
```js
// Draws the wireframe figure of the viewport: hips, legs and both hands.
const NS = 'http://www.w3.org/2000/svg';
const human = document.getElementById('human');
const CX = 1543;

function path(d, attrs) {
  const p = document.createElementNS(NS, 'path');
  p.setAttribute('d', d);
  for (const k in attrs) p.setAttribute(k, attrs[k]);
  human.appendChild(p);
}
function lerpTable(t, y) {
  for (let i = 1; i < t.length; i++) {
    if (y <= t[i][0]) {
      const a = t[i - 1], b = t[i], f = (y - a[0]) / (b[0] - a[0]);
      return a[1] + (b[1] - a[1]) * f;
    }
  }
  return t[t.length - 1][1];
}
// Half widths of the figure by height.
const outer = [[1400, 190], [1538, 211], [1580, 217], [1619, 225], [1693, 236], [1753, 242], [1790, 242], [1840, 240]];
const inner = [[1400, 0], [1653, 0], [1655, 7], [1660, 11], [1673, 15], [1719, 19], [1773, 23], [1829, 31], [1840, 32]];
const CROTCH = 1653;

function at(s, u, y) {
  const o = lerpTable(outer, y), i = lerpTable(inner, y);
  return CX + s * (i + (o - i) * u);
}
const lines = [], front = [];
for (const s of [-1, 1]) {
  for (let k = 0; k <= 34; k++) {
    const u = Math.sin(k / 34 * Math.PI / 2);
    let d = '';
    for (let y = 1500; y <= 1836; y += 8) {
      const near = Math.max(0, 1 - Math.abs(y - CROTCH) / 120);
      const v = y < CROTCH ? Math.pow(u, 1 + near * 0.7) : 0.5 - 0.5 * Math.cos(Math.PI * (u * 0.5 + k / 68));
      const w = y < CROTCH ? v : v + (Math.pow(u, 1 + near * 0.7) - v) * near;
      d += (d ? 'L' : 'M') + at(s, w, y).toFixed(1) + ' ' + y;
    }
    lines.push(d);
  }
  // Rings around each leg, lower toward the inside.
  for (let y0 = 1560; y0 < 1860; y0 += 12) {
    for (const sag of [46, 30]) {
      let d = '';
      for (let k = 0; k <= 20; k++) {
        const t = 1 - k / 20;
        const y = y0 + sag * Math.sin((1 - t) * Math.PI / 2);
        d += (d ? 'L' : 'M') + at(s, t, y).toFixed(1) + ' ' + y.toFixed(1);
      }
      front.push(d);
    }
  }
  // Fan of edges that runs into the crotch.
  for (let k = 1; k < 12; k++) {
    front.push(`M${CX + s * k * 17} 1530Q${CX + s * k * 9} 1600 ${CX + s * k * 1.4} ${CROTCH - 2}`);
  }
  for (let k = 1; k < 8; k++) {
    front.push(`M${CX - s * k * 18} 1530Q${CX + s * k * 5} 1590 ${CX + s * (16 + k * 3)} ${CROTCH + 20 + k * 6}`);
  }
}
for (let y0 = 1480; y0 < 1650; y0 += 9) {
  const o = lerpTable(outer, y0) - 2;
  front.push(`M${CX - o} ${y0}Q${CX} ${y0 + 90} ${CX + o} ${y0}`);
}
path(lines.join(''), { fill: 'none', stroke: '#b5741f', 'stroke-width': 1, opacity: 0.85 });
path(front.join(''), { fill: 'none', stroke: '#cf8425', 'stroke-width': 1, opacity: 0.8 });

for (const s of [-1, 1]) {
  let o = '', n = '';
  for (let y = 1500; y <= 1840; y += 10) o += (o ? 'L' : 'M') + at(s, 1, y) + ' ' + y;
  for (let y = CROTCH + 4; y <= 1840; y += 5) n += (n ? 'L' : 'M') + at(s, 0, y) + ' ' + y;
  path(o + n, { fill: 'none', stroke: '#f09a2c', 'stroke-width': 3 });
}
path(`M${CX - 12} ${CROTCH + 6}Q${CX} ${CROTCH - 10} ${CX + 12} ${CROTCH + 6}`, { fill: 'none', stroke: '#f09a2c', 'stroke-width': 5 });

// Hands, mirrored about the centre line.
const hand = [[586, 1500], [581, 1538], [583, 1576], [594, 1626], [588, 1646], [588, 1676], [579, 1706], [566, 1733], [563, 1748], [550, 1748], [543, 1733], [533, 1719], [537, 1703], [550, 1673], [552, 1646], [545, 1619], [535, 1618], [523, 1612], [523, 1596], [525, 1579], [520, 1538], [519, 1500]];
for (const s of [-1, 1]) {
  const d = 'M' + hand.map(p => (CX + s * p[0]) + ' ' + p[1]).join('L') + 'Z';
  path(d, { fill: 'url(#weave)', stroke: '#e8942b', 'stroke-width': 3, 'stroke-linejoin': 'round' });
  const q = (x, y) => (CX + s * x) + ' ' + y;
  path(`M${q(552, 1590)}L${q(550, 1620)}M${q(576, 1640)}Q${q(566, 1690)} ${q(553, 1730)}M${q(566, 1640)}Q${q(562, 1680)} ${q(545, 1722)}M${q(583, 1650)}L${q(562, 1738)}`, { fill: 'none', stroke: '#f09a2c', 'stroke-width': 2 });
  path(`M${q(546, 1600)}Q${q(535, 1585)} ${q(526, 1602)}Q${q(526, 1620)} ${q(540, 1612)}Z`, { fill: '#d98a29' });
}
```
